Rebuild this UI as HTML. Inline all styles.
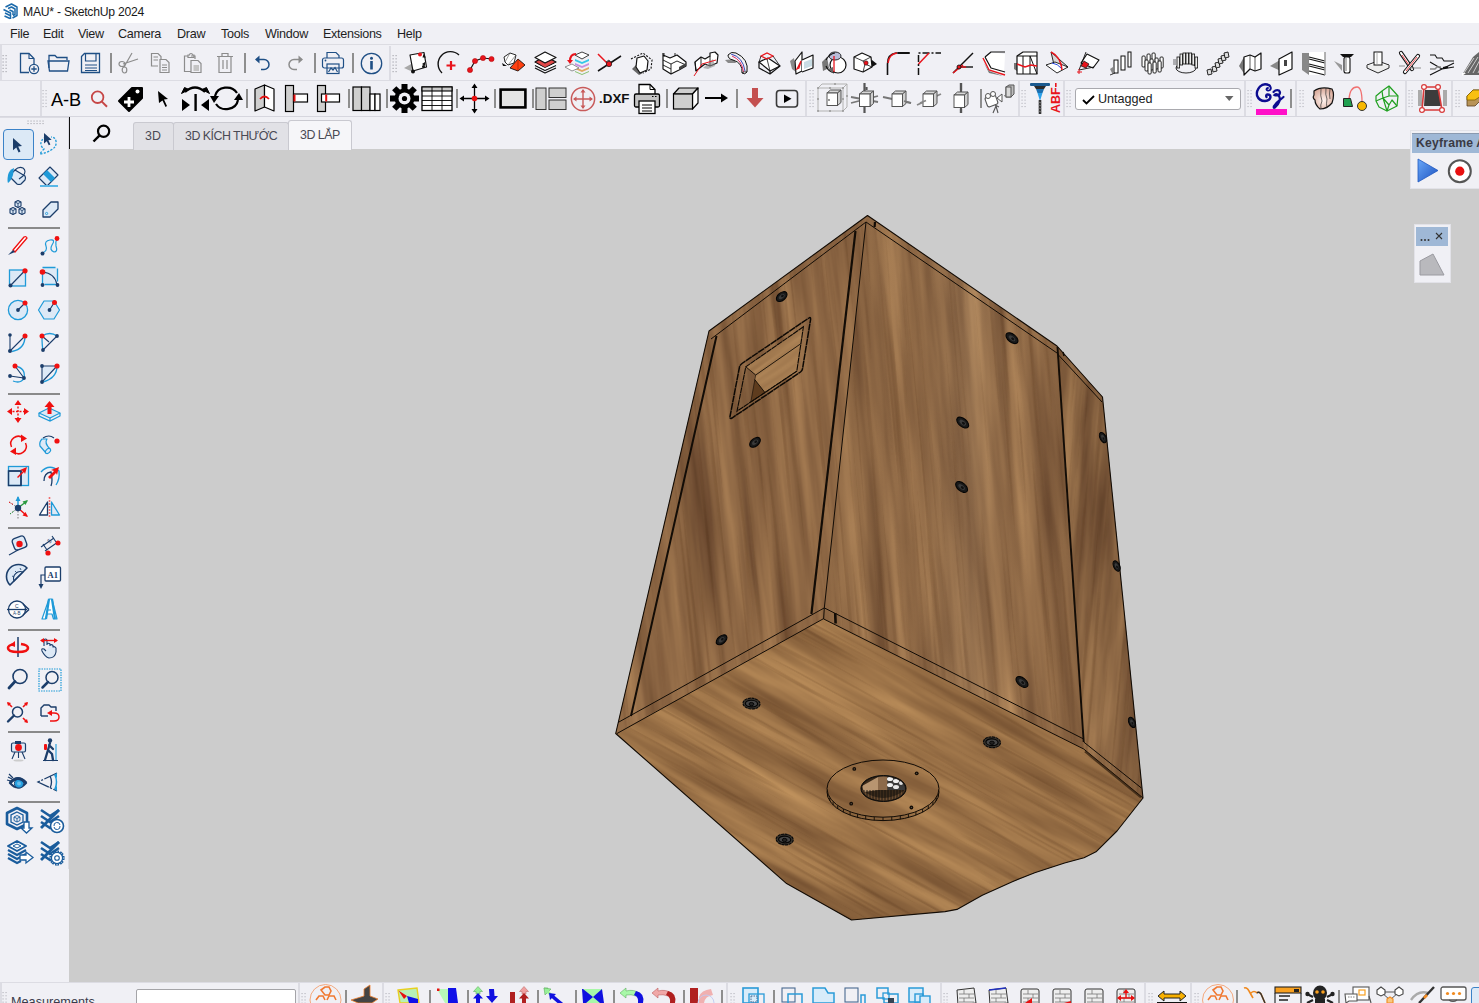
<!DOCTYPE html><html><head><meta charset="utf-8"><style>
html,body{margin:0;padding:0}
body{width:1479px;height:1003px;position:relative;overflow:hidden;background:#f0f0f5;font-family:"Liberation Sans",sans-serif}
.t{position:absolute;white-space:nowrap;line-height:1}
.a{position:absolute}
svg{position:absolute;overflow:visible}
</style></head><body>
<div style="position:absolute;left:0;top:0;width:1479px;height:23px;background:#fff"></div>
<svg style="position:absolute;left:2px;top:2px" width="17" height="18" viewBox="0 0 17 18"><g fill="none" stroke="#1b6aab" stroke-width="1.5" stroke-linejoin="round"><path d="M3.5,5 L9.5,2 L15,5 V13.5 L10.5,16"/><path d="M6,6.5 L9.5,5 L13,7 V12.5 L11,13.5"/><path d="M1.5,7.5 L8.5,11 V17"/><path d="M3,11 L8,13.5"/><path d="M2.5,14 L8,16.5"/><path d="M7.5,8 L11,9.5 V13"/></g></svg>
<div class="t" style="left:23px;top:6px;font-size:12.2px;color:#1a1a1a;letter-spacing:-0.25px">MAU* - SketchUp 2024</div>
<div class="t" style="left:10px;top:28px;font-size:12.6px;color:#1e1e1e;letter-spacing:-0.3px">File</div>
<div class="t" style="left:43px;top:28px;font-size:12.6px;color:#1e1e1e;letter-spacing:-0.3px">Edit</div>
<div class="t" style="left:78px;top:28px;font-size:12.6px;color:#1e1e1e;letter-spacing:-0.3px">View</div>
<div class="t" style="left:118px;top:28px;font-size:12.6px;color:#1e1e1e;letter-spacing:-0.3px">Camera</div>
<div class="t" style="left:177px;top:28px;font-size:12.6px;color:#1e1e1e;letter-spacing:-0.3px">Draw</div>
<div class="t" style="left:221px;top:28px;font-size:12.6px;color:#1e1e1e;letter-spacing:-0.3px">Tools</div>
<div class="t" style="left:265px;top:28px;font-size:12.6px;color:#1e1e1e;letter-spacing:-0.3px">Window</div>
<div class="t" style="left:323px;top:28px;font-size:12.6px;color:#1e1e1e;letter-spacing:-0.3px">Extensions</div>
<div class="t" style="left:397px;top:28px;font-size:12.6px;color:#1e1e1e;letter-spacing:-0.3px">Help</div>
<div style="position:absolute;left:0;top:44px;width:1479px;height:1px;background:#dcdce2"></div>
<div style="position:absolute;left:69px;top:149px;width:1410px;height:833px;background:#cccccc"></div>
<svg width="1479" height="1003" style="left:0;top:0" viewBox="0 0 1479 1003">
<defs>
<filter id="wA" filterUnits="userSpaceOnUse" x="-2000" y="-2000" width="4000" height="4000" color-interpolation-filters="sRGB"><feTurbulence type="fractalNoise" baseFrequency="0.055 0.0032" numOctaves="4" seed="7" result="n"/><feColorMatrix in="n" type="matrix" values="0.38 0 0 0 0.38  0.33 0 0 0 0.255  0.23 0 0 0 0.165  0 0 0 0 1"/></filter>
<filter id="wB" filterUnits="userSpaceOnUse" x="-2000" y="-2000" width="4000" height="4000" color-interpolation-filters="sRGB"><feTurbulence type="fractalNoise" baseFrequency="0.05 0.003" numOctaves="4" seed="11" result="n"/><feColorMatrix in="n" type="matrix" values="0.38 0 0 0 0.38  0.33 0 0 0 0.255  0.23 0 0 0 0.165  0 0 0 0 1"/></filter>
<filter id="wC" filterUnits="userSpaceOnUse" x="-2000" y="-2000" width="4000" height="4000" color-interpolation-filters="sRGB"><feTurbulence type="fractalNoise" baseFrequency="0.06 0.005" numOctaves="4" seed="5" result="n"/><feColorMatrix in="n" type="matrix" values="0.38 0 0 0 0.38  0.33 0 0 0 0.255  0.23 0 0 0 0.165  0 0 0 0 1"/></filter>
<filter id="wD" filterUnits="userSpaceOnUse" x="-2000" y="-2000" width="4000" height="4000" color-interpolation-filters="sRGB"><feTurbulence type="fractalNoise" baseFrequency="0.0045 0.05" numOctaves="4" seed="21" result="n"/><feColorMatrix in="n" type="matrix" values="0.39 0 0 0 0.405  0.34 0 0 0 0.27  0.23 0 0 0 0.16  0 0 0 0 1"/></filter>
<filter id="fV" filterUnits="userSpaceOnUse" x="-2000" y="-2000" width="4000" height="4000" color-interpolation-filters="sRGB"><feTurbulence type="fractalNoise" baseFrequency="0.22 0.004" numOctaves="2" seed="17" result="n"/><feColorMatrix in="n" type="matrix" values="0 0 0 0 0.33  0 0 0 0 0.2  0 0 0 0 0.1  4 0 0 0 -2.3"/></filter>
<filter id="fH" filterUnits="userSpaceOnUse" x="-2000" y="-2000" width="4000" height="4000" color-interpolation-filters="sRGB"><feTurbulence type="fractalNoise" baseFrequency="0.006 0.22" numOctaves="2" seed="23" result="n"/><feColorMatrix in="n" type="matrix" values="0 0 0 0 0.33  0 0 0 0 0.2  0 0 0 0 0.1  4 0 0 0 -2.3"/></filter>
<linearGradient id="gB" x1="0" y1="0" x2="1" y2="0">
<stop offset="0" stop-color="#000" stop-opacity="0.10"/><stop offset="0.5" stop-color="#fff" stop-opacity="0.04"/><stop offset="1" stop-color="#000" stop-opacity="0.06"/></linearGradient>
</defs>
<polygon points="867.5,215.5 1057,346 1102.5,397 1143,798 1117,831 1096,851.8 1084,857.8 1064.6,863 1034.7,872.7 1012.3,881.7 982.3,895.2 956.9,909.4 945,911.6 851.5,920 786.6,883.6 615.7,733.5 709,331" fill="#8a603a"/>
<clipPath id="cA"><polygon points="709,331 867.5,215.5 866,222 824.3,608 823.3,618.8 617,733.5 615.7,733.5"/></clipPath><g clip-path="url(#cA)"><g transform="rotate(-6 740 480)"><rect x="240" y="-20" width="1000" height="1000" filter="url(#wA)"/><rect x="240" y="-20" width="1000" height="1000" filter="url(#fV)" opacity="0.25"/></g></g>
<clipPath id="cB"><polygon points="867.5,215.5 1057,346 1083.7,749 823.3,618.8 824.3,608 866,222"/></clipPath><g clip-path="url(#cB)"><g transform="rotate(-5 950 480)"><rect x="450" y="-20" width="1000" height="1000" filter="url(#wB)"/><rect x="450" y="-20" width="1000" height="1000" filter="url(#fV)" opacity="0.25"/></g></g>
<clipPath id="cC"><polygon points="1057,346 1102.5,397 1143,798 1083.7,749"/></clipPath><g clip-path="url(#cC)"><g transform="rotate(5 1100 570)"><rect x="600" y="70" width="1000" height="1000" filter="url(#wC)"/><rect x="600" y="70" width="1000" height="1000" filter="url(#fV)" opacity="0.25"/></g></g>
<clipPath id="cD"><polygon points="615.7,733.5 823.3,618.8 1083.7,749 1143,798 1117,831 1096,851.8 1084,857.8 1064.6,863 1034.7,872.7 1012.3,881.7 982.3,895.2 956.9,909.4 945,911.6 851.5,920 786.6,883.6"/></clipPath><g clip-path="url(#cD)"><g transform="rotate(29 880 780)"><rect x="380" y="280" width="1000" height="1000" filter="url(#wD)"/><rect x="380" y="280" width="1000" height="1000" filter="url(#fH)" opacity="0.25"/></g></g>
<polygon points="1057,346 1102.5,397 1143,798 1083.7,749" fill="#1a0800" fill-opacity="0.10"/>
<polygon points="709,331 867.5,215.5 866,222 824.3,608 823.3,618.8 617,733.5 615.7,733.5" fill="#3a1a00" fill-opacity="0.05"/>
<linearGradient id="gBs" gradientUnits="userSpaceOnUse" x1="840" y1="0" x2="1080" y2="0"><stop offset="0" stop-color="#2a1000" stop-opacity="0.10"/><stop offset="0.3" stop-color="#2a1000" stop-opacity="0.05"/><stop offset="0.55" stop-color="#fff0d0" stop-opacity="0.06"/><stop offset="0.8" stop-color="#2a1000" stop-opacity="0.0"/><stop offset="1" stop-color="#2a1000" stop-opacity="0.08"/></linearGradient>
<polygon points="867.5,215.5 1057,346 1083.7,749 823.3,618.8 824.3,608 866,222" fill="url(#gBs)"/>
<polygon points="867.5,215.5 1057,346 1102.5,397 1143,798 1117,831 1096,851.8 1084,857.8 1064.6,863 1034.7,872.7 1012.3,881.7 982.3,895.2 956.9,909.4 945,911.6 851.5,920 786.6,883.6 615.7,733.5 709,331" fill="none" stroke="#120c06" stroke-width="1.1" stroke-linejoin="round"/>
<line x1="711" y1="339" x2="866" y2="222" stroke="#120c06" stroke-width="1" stroke-opacity="1"/>
<line x1="866" y1="222" x2="1057" y2="353" stroke="#120c06" stroke-width="1" stroke-opacity="1"/>
<line x1="1058" y1="354.5" x2="1102" y2="402" stroke="#120c06" stroke-width="1" stroke-opacity="1"/>
<line x1="631" y1="716" x2="716.5" y2="336" stroke="#120c06" stroke-width="2" stroke-opacity="1"/>
<line x1="855.5" y1="231" x2="811.4" y2="614" stroke="#120c06" stroke-width="2.2" stroke-opacity="1"/>
<line x1="866" y1="222" x2="824.3" y2="608" stroke="#120c06" stroke-width="1" stroke-opacity="1"/>
<line x1="618" y1="722.5" x2="824.3" y2="607.9" stroke="#120c06" stroke-width="1" stroke-opacity="1"/>
<line x1="617" y1="733.5" x2="823.3" y2="618.8" stroke="#120c06" stroke-width="1" stroke-opacity="1"/>
<line x1="824.3" y1="607.9" x2="1083.7" y2="739" stroke="#120c06" stroke-width="1" stroke-opacity="1"/>
<line x1="823.3" y1="618.8" x2="1083.7" y2="749" stroke="#120c06" stroke-width="1" stroke-opacity="1"/>
<line x1="1057.5" y1="347" x2="1083.7" y2="742" stroke="#120c06" stroke-width="1.9" stroke-opacity="1"/>
<line x1="1083.7" y1="742" x2="1141.4" y2="788" stroke="#120c06" stroke-width="1" stroke-opacity="1"/>
<line x1="1083.7" y1="749" x2="1143" y2="798" stroke="#120c06" stroke-width="1" stroke-opacity="1"/>
<line x1="1085" y1="751.5" x2="1141" y2="797.5" stroke="#2a1a0c" stroke-width="2.2" stroke-opacity="0.7"/>
<line x1="875" y1="222" x2="874.6" y2="227" stroke="#120c06" stroke-width="2.2" stroke-opacity="1"/>
<line x1="835.2" y1="613" x2="835.6" y2="623.5" stroke="#120c06" stroke-width="2.6" stroke-opacity="1"/>
<line x1="824.3" y1="608" x2="823.6" y2="619" stroke="#120c06" stroke-width="1" stroke-opacity="1"/>
<line x1="1063" y1="352" x2="1064" y2="356" stroke="#120c06" stroke-width="1.5" stroke-opacity="1"/>
<filter id="wH" filterUnits="userSpaceOnUse" x="-2000" y="-2000" width="4000" height="4000" color-interpolation-filters="sRGB"><feTurbulence type="fractalNoise" baseFrequency="0.004 0.09" numOctaves="3" seed="9" result="n"/><feColorMatrix in="n" type="matrix" values="0.40 0 0 0 0.45  0.36 0 0 0 0.31  0.26 0 0 0 0.19  0 0 0 0 1"/></filter>
<clipPath id="cH1"><polygon points="745.8,366.8 803.4,326.8 800.7,343.8 755.7,375"/></clipPath><g clip-path="url(#cH1)"><g transform="rotate(-35 775 350)"><rect x="275" y="-150" width="1000" height="1000" filter="url(#wH)"/></g></g>
<clipPath id="cH2"><polygon points="755.7,375 800.7,343.8 796.8,371.2 765,392.6 754.6,380"/></clipPath><g clip-path="url(#cH2)"><g transform="rotate(-35 775 360)"><rect x="275" y="-140" width="1000" height="1000" filter="url(#wH)"/></g></g>
<polygon points="745.8,366.8 755.7,375 754.6,380 750.8,402 737,411.2" fill="#000" fill-opacity="0.06"/>
<polygon points="754.6,379.4 765,392.6 750.8,402" fill="#5e3c1e"/>
<path d="M808.9,318 Q811,316.5 810.5,320 L802.5,369 Q802,371 800.5,372 L732,418 Q729.5,419.5 730,416.5 L739.5,367 Q740,365 742,363.5 Z" fill="none" stroke="#0c0804" stroke-width="1.5" stroke-dasharray="7,0.5"/>
<polygon points="803.4,326.8 745.8,366.8 737,411.2 796.8,371.2" fill="none" stroke="#0c0804" stroke-width="1.1" stroke-dasharray="6,0.5"/>
<line x1="745.8" y1="366.8" x2="755.7" y2="375" stroke="#120c06" stroke-width="0.9" stroke-opacity="1"/>
<line x1="755.7" y1="375" x2="800.7" y2="343.8" stroke="#120c06" stroke-width="0.9" stroke-opacity="1"/>
<line x1="754.6" y1="379.4" x2="765" y2="392.6" stroke="#120c06" stroke-width="0.9" stroke-opacity="1"/>
<line x1="750.8" y1="402" x2="796.8" y2="371.2" stroke="#120c06" stroke-width="0.9" stroke-opacity="1"/>
<line x1="755.7" y1="375" x2="750.8" y2="402" stroke="#120c06" stroke-width="0.6" stroke-opacity="1"/>
<g transform="translate(781.7,296.6) rotate(-40)"><ellipse rx="6.2" ry="3.8" fill="#1a1a1a" stroke="#050505" stroke-width="1.1"/><ellipse rx="3.4100000000000006" ry="1.9" fill="#3a3a3a"/><ellipse cx="1" rx="1.55" ry="1.14" fill="#111"/></g>
<g transform="translate(755,442.3) rotate(-40)"><ellipse rx="6.2" ry="3.8" fill="#1a1a1a" stroke="#050505" stroke-width="1.1"/><ellipse rx="3.4100000000000006" ry="1.9" fill="#3a3a3a"/><ellipse cx="1" rx="1.55" ry="1.14" fill="#111"/></g>
<g transform="translate(721.6,639.8) rotate(-40)"><ellipse rx="6.2" ry="3.8" fill="#1a1a1a" stroke="#050505" stroke-width="1.1"/><ellipse rx="3.4100000000000006" ry="1.9" fill="#3a3a3a"/><ellipse cx="1" rx="1.55" ry="1.14" fill="#111"/></g>
<g transform="translate(1012,338.2) rotate(40)"><ellipse rx="7" ry="4" fill="#1a1a1a" stroke="#050505" stroke-width="1.1"/><ellipse rx="3.8500000000000005" ry="2.0" fill="#3a3a3a"/><ellipse cx="1" rx="1.75" ry="1.2" fill="#111"/></g>
<g transform="translate(962.7,422.6) rotate(40)"><ellipse rx="7" ry="4" fill="#1a1a1a" stroke="#050505" stroke-width="1.1"/><ellipse rx="3.8500000000000005" ry="2.0" fill="#3a3a3a"/><ellipse cx="1" rx="1.75" ry="1.2" fill="#111"/></g>
<g transform="translate(961.6,487) rotate(40)"><ellipse rx="7" ry="4" fill="#1a1a1a" stroke="#050505" stroke-width="1.1"/><ellipse rx="3.8500000000000005" ry="2.0" fill="#3a3a3a"/><ellipse cx="1" rx="1.75" ry="1.2" fill="#111"/></g>
<g transform="translate(1022,682) rotate(40)"><ellipse rx="7" ry="4" fill="#1a1a1a" stroke="#050505" stroke-width="1.1"/><ellipse rx="3.8500000000000005" ry="2.0" fill="#3a3a3a"/><ellipse cx="1" rx="1.75" ry="1.2" fill="#111"/></g>
<g transform="translate(1103,437.6) rotate(65)"><ellipse rx="5.5" ry="3" fill="#1a1a1a" stroke="#050505" stroke-width="1.1"/><ellipse rx="3.0250000000000004" ry="1.5" fill="#3a3a3a"/><ellipse cx="1" rx="1.375" ry="0.8999999999999999" fill="#111"/></g>
<g transform="translate(1116.6,566) rotate(65)"><ellipse rx="5.5" ry="3" fill="#1a1a1a" stroke="#050505" stroke-width="1.1"/><ellipse rx="3.0250000000000004" ry="1.5" fill="#3a3a3a"/><ellipse cx="1" rx="1.375" ry="0.8999999999999999" fill="#111"/></g>
<g transform="translate(1132,722.4) rotate(65)"><ellipse rx="5.5" ry="3" fill="#1a1a1a" stroke="#050505" stroke-width="1.1"/><ellipse rx="3.0250000000000004" ry="1.5" fill="#3a3a3a"/><ellipse cx="1" rx="1.375" ry="0.8999999999999999" fill="#111"/></g>
<g transform="translate(751.5,703.6) rotate(4)"><ellipse rx="8.5" ry="5.4" fill="#3a3630" stroke="#0a0a0a" stroke-width="1.2" stroke-dasharray="3,0.6"/><ellipse rx="6.12" ry="3.3480000000000003" fill="#454545" stroke="#050505" stroke-width="1.2"/><ellipse cx="0" cy="0.5" rx="2.3800000000000003" ry="1.62" fill="#222" stroke="#000" stroke-width="0.8"/></g>
<g transform="translate(992,742.3) rotate(4)"><ellipse rx="8.5" ry="5.4" fill="#3a3630" stroke="#0a0a0a" stroke-width="1.2" stroke-dasharray="3,0.6"/><ellipse rx="6.12" ry="3.3480000000000003" fill="#454545" stroke="#050505" stroke-width="1.2"/><ellipse cx="0" cy="0.5" rx="2.3800000000000003" ry="1.62" fill="#222" stroke="#000" stroke-width="0.8"/></g>
<g transform="translate(784.7,839.5) rotate(4)"><ellipse rx="8.5" ry="5.4" fill="#3a3630" stroke="#0a0a0a" stroke-width="1.2" stroke-dasharray="3,0.6"/><ellipse rx="6.12" ry="3.3480000000000003" fill="#454545" stroke="#050505" stroke-width="1.2"/><ellipse cx="0" cy="0.5" rx="2.3800000000000003" ry="1.62" fill="#222" stroke="#000" stroke-width="0.8"/></g>
<ellipse cx="883" cy="792" rx="56" ry="28.6" fill="#6a4a2a" fill-opacity="0.25" stroke="#120c06" stroke-width="1"/>
<line x1="938.3105482356433" y1="793.0740219522354" x2="938.3105482356433" y2="796.5740219522354" stroke="#120c06" stroke-width="0.9"/><line x1="936.259169504551" y1="797.4378788213015" x2="936.259169504551" y2="800.9378788213015" stroke="#120c06" stroke-width="0.9"/><line x1="932.8963754740629" y1="801.5841181494206" x2="932.8963754740629" y2="805.0841181494206" stroke="#120c06" stroke-width="0.9"/><line x1="928.3049691540892" y1="805.4106459358708" x2="928.3049691540892" y2="808.9106459358708" stroke="#120c06" stroke-width="0.9"/><line x1="922.5980060156367" y1="808.8232405258758" x2="922.5980060156367" y2="812.3232405258758" stroke="#120c06" stroke-width="0.9"/><line x1="915.9160101945953" y1="811.7378726565389" x2="915.9160101945953" y2="815.2378726565389" stroke="#120c06" stroke-width="0.9"/><line x1="908.4235143269736" y1="814.0827745326837" x2="908.4235143269736" y2="817.5827745326837" stroke="#120c06" stroke-width="0.9"/><line x1="900.3050082161778" y1="815.8002069851764" x2="900.3050082161778" y2="819.3002069851764" stroke="#120c06" stroke-width="0.9"/><line x1="891.7603960894231" y1="816.8478811984978" x2="891.7603960894231" y2="820.3478811984978" stroke="#120c06" stroke-width="0.9"/><line x1="883.0000743005143" y1="817.1999999999748" x2="883.0000743005143" y2="820.6999999999748" stroke="#120c06" stroke-width="0.9"/><line x1="874.2397506820831" y1="816.8478930707167" x2="874.2397506820831" y2="820.3478930707167" stroke="#120c06" stroke-width="0.9"/><line x1="865.6951331118107" y1="815.8002304372815" x2="865.6951331118107" y2="819.3002304372815" stroke="#120c06" stroke-width="0.9"/><line x1="857.576618077539" y1="814.0828089872072" x2="857.576618077539" y2="817.5828089872072" stroke="#120c06" stroke-width="0.9"/><line x1="850.0841100262085" y1="811.7379172650974" x2="850.0841100262085" y2="815.2379172650974" stroke="#120c06" stroke-width="0.9"/><line x1="843.4020990612279" y1="808.8232941900604" x2="843.4020990612279" y2="812.3232941900604" stroke="#120c06" stroke-width="0.9"/><line x1="837.6951181914994" y1="805.4107073342934" x2="837.6951181914994" y2="808.9107073342934" stroke="#120c06" stroke-width="0.9"/><line x1="833.1036919895153" y1="801.5841857702511" x2="833.1036919895153" y2="805.0841857702511" stroke="#120c06" stroke-width="0.9"/><line x1="829.7408764158422" y1="797.4379509994932" x2="829.7408764158422" y2="800.9379509994932" stroke="#120c06" stroke-width="0.9"/><line x1="827.6894750108543" y1="793.0740969105246" x2="827.6894750108543" y2="796.5740969105246" stroke="#120c06" stroke-width="0.9"/>
<clipPath id="cP"><polygon points="939.0,788.6 938.3105438554751,793.0740360761785 936.2591521995869,797.4379060215158 932.8963373388347,801.5841563735937 928.3049033220985,805.4106922116271 922.5979070206292,808.823291083981 915.9158742796707,811.7379230884646 908.4233396896219,814.0828199770596 900.3047951794532,815.8002423366185 891.7601471919196,816.8479013314792 882.9997943005142,817.1999999998071 874.2394464741365,816.847868463375 865.6948135569675,815.8001774097355 857.5762937514162,814.0827245901206 850.0837928919251,811.7377995902239 843.4018020769024,808.8231425153889 837.6948548643868,805.4105222309527 833.1034758908833,801.5839691663449 829.7407206722892,797.4377061973779 827.6893917888901,793.0738285555078 827.0000000015111,788.5997898926681 827.6895205031448,784.1257564033924 829.7409749314114,779.7618941548233 833.1038494341404,775.6156564198583 837.6953384938614,771.7891378086059 843.4023838839762,768.3765603485185 850.0844585505099,765.4619534145432 857.5770268707121,763.1170846373769 865.69559608506,761.3996927379666 874.240259142497,760.3520658019411 883.0006170984574,760.0000000017365 891.7609598593347,760.3521644062539 900.3055777056779,761.3998875186156 908.4240728061735,763.1173707981936 915.9165399347027,765.4623239092658 922.5984888234287,768.3770060542946 928.3053869466829,771.789647750629 932.896710876706,775.6162180416046 936.2594064529603,779.7624936272371 938.3106725637595,784.1263789654043"/></clipPath><g clip-path="url(#cP)"><g transform="rotate(24 880 780)"><rect x="380" y="280" width="1000" height="1000" filter="url(#wD)"/></g></g>
<ellipse cx="883" cy="788.6" rx="56" ry="28.6" fill="none" stroke="#120c06" stroke-width="1"/>
<ellipse cx="883.5" cy="788.5" rx="22.6" ry="13" fill="#1a140e" stroke="#0c0c0c" stroke-width="1"/>
<clipPath id="ph"><ellipse cx="883.5" cy="788.5" rx="21.5" ry="12"/></clipPath>
<g clip-path="url(#ph)"><rect x="860" y="776" width="48" height="26" fill="#3a2a1a"/><polygon points="862,786 878,777 878,790 864,792" fill="#b89570"/><rect x="878" y="776" width="9.5" height="14" fill="#8c6a4a"/><rect x="887.5" y="776" width="20" height="14" fill="#3a3a3a"/><ellipse cx="890" cy="779" rx="3" ry="2" fill="#f0f0f0"/><ellipse cx="896" cy="781" rx="3" ry="2" fill="#f0f0f0"/><ellipse cx="890" cy="785" rx="3" ry="2" fill="#f0f0f0"/><ellipse cx="896" cy="787" rx="3" ry="2" fill="#e8e8e8"/><ellipse cx="901" cy="783" rx="2" ry="2" fill="#ddd"/><path d="M862,790 Q883,806 905,790 L905,802 L862,802Z" fill="#6a4c30"/><line x1="864" y1="790" x2="864" y2="802" stroke="#0c0c0c" stroke-width="0.8"/><line x1="867" y1="790" x2="867" y2="802" stroke="#0c0c0c" stroke-width="0.8"/><line x1="870" y1="790" x2="870" y2="802" stroke="#0c0c0c" stroke-width="0.8"/><line x1="873" y1="790" x2="873" y2="802" stroke="#0c0c0c" stroke-width="0.8"/><line x1="876" y1="790" x2="876" y2="802" stroke="#0c0c0c" stroke-width="0.8"/><line x1="879" y1="790" x2="879" y2="802" stroke="#0c0c0c" stroke-width="0.8"/><line x1="882" y1="790" x2="882" y2="802" stroke="#0c0c0c" stroke-width="0.8"/><line x1="885" y1="790" x2="885" y2="802" stroke="#0c0c0c" stroke-width="0.8"/><line x1="888" y1="790" x2="888" y2="802" stroke="#0c0c0c" stroke-width="0.8"/><line x1="891" y1="790" x2="891" y2="802" stroke="#0c0c0c" stroke-width="0.8"/><line x1="894" y1="790" x2="894" y2="802" stroke="#0c0c0c" stroke-width="0.8"/><line x1="897" y1="790" x2="897" y2="802" stroke="#0c0c0c" stroke-width="0.8"/><line x1="900" y1="790" x2="900" y2="802" stroke="#0c0c0c" stroke-width="0.8"/><line x1="903" y1="790" x2="903" y2="802" stroke="#0c0c0c" stroke-width="0.8"/></g>
<circle cx="854.3" cy="768.9" r="1.9" fill="#120c06"/><circle cx="854.3" cy="768.9" r="0.6" fill="#6a5a4a"/>
<circle cx="916.7" cy="773.3" r="1.9" fill="#120c06"/><circle cx="916.7" cy="773.3" r="0.6" fill="#6a5a4a"/>
<circle cx="851.2" cy="803.7" r="1.9" fill="#120c06"/><circle cx="851.2" cy="803.7" r="0.6" fill="#6a5a4a"/>
<circle cx="911.4" cy="807.5" r="1.9" fill="#120c06"/><circle cx="911.4" cy="807.5" r="0.6" fill="#6a5a4a"/>
</svg>
<div class="a" style="left:0px;top:80px;width:1479px;height:1px;background:#dcdce3"></div>
<div class="a" style="left:0px;top:45px;width:2px;height:35px;background:#dcdce3"></div>
<svg style="left:2px;top:54px" width="5" height="21" viewBox="0 0 5 21" ><rect x="0.5" y="1.0" width="1.2" height="1.2" fill="#a8a8b0"/><rect x="3.5" y="1.0" width="1.2" height="1.2" fill="#a8a8b0"/><rect x="0.5" y="4.2" width="1.2" height="1.2" fill="#a8a8b0"/><rect x="3.5" y="4.2" width="1.2" height="1.2" fill="#a8a8b0"/><rect x="0.5" y="7.4" width="1.2" height="1.2" fill="#a8a8b0"/><rect x="3.5" y="7.4" width="1.2" height="1.2" fill="#a8a8b0"/><rect x="0.5" y="10.6" width="1.2" height="1.2" fill="#a8a8b0"/><rect x="3.5" y="10.6" width="1.2" height="1.2" fill="#a8a8b0"/><rect x="0.5" y="13.8" width="1.2" height="1.2" fill="#a8a8b0"/><rect x="3.5" y="13.8" width="1.2" height="1.2" fill="#a8a8b0"/><rect x="0.5" y="17.0" width="1.2" height="1.2" fill="#a8a8b0"/><rect x="3.5" y="17.0" width="1.2" height="1.2" fill="#a8a8b0"/></svg>
<svg style="left:19px;top:52px" width="22" height="23" viewBox="0 0 22 23" ><path d="M10,20.5 H1.5 V1.5 H10 L15,6.5 V12" fill="none" stroke="#1f4f85" stroke-width="1.3"/><path d="M10,1.5 V6.5 H15" fill="none" stroke="#1f4f85" stroke-width="1.1"/><circle cx="15" cy="17" r="4.6" fill="#f0f0f5" stroke="#1f4f85" stroke-width="1.3"/><path d="M15,14.3 V19.7 M12.3,17 H17.7" stroke="#1f4f85" stroke-width="1.3"/></svg>
<svg style="left:47px;top:54px" width="24" height="19" viewBox="0 0 24 19" ><path d="M2,14 V1.5 H8 L10,3.5 H20 V6" fill="none" stroke="#1f4f85" stroke-width="1.3"/><path d="M1,7 H22 L20.5,17 H2.5 Z" fill="none" stroke="#1f4f85" stroke-width="1.3"/></svg>
<svg style="left:80px;top:52px" width="22" height="22" viewBox="0 0 22 22" ><path d="M1.5,4.5 L4.5,1.5 H19.5 V20.5 H1.5 Z" fill="none" stroke="#1f4f85" stroke-width="1.3"/><path d="M5.5,1.5 V9 H16 V1.5" fill="none" stroke="#1f4f85" stroke-width="1.2"/><path d="M5,13 H17 M5,16 H17 M5,18.5 H17" stroke="#1f4f85" stroke-width="1"/></svg>
<div class="a" style="left:110px;top:53px;width:2px;height:20px;background:#8e8e8e"></div>
<svg style="left:118px;top:52px" width="22" height="22" viewBox="0 0 22 22" ><g fill="none" stroke="#8c8c8c" stroke-width="1.2"><path d="M14,1 L6,15 M20,7 L5,12"/><ellipse cx="4" cy="12" rx="3" ry="2.5"/><ellipse cx="6.5" cy="18" rx="2.3" ry="3"/></g></svg>
<svg style="left:150px;top:52px" width="22" height="22" viewBox="0 0 22 22" ><g fill="none" stroke="#8c8c8c" stroke-width="1.2"><path d="M8,14 H1.5 V1.5 H8 L11,4.5 V7"/><path d="M10,7.5 H16 L19,10.5 V20.5 H10 Z"/><path d="M3.5,5 H8 M3.5,8 H8 M12,13 H17 M12,15.5 H17 M12,18 H17"/></g></svg>
<svg style="left:183px;top:52px" width="22" height="22" viewBox="0 0 22 22" ><g fill="none" stroke="#8c8c8c" stroke-width="1.2"><path d="M5,4 H1.5 V19.5 H8"/><path d="M8,4 H12 V7"/><path d="M5,5.5 H11 V3 H9.5 A1.5,1.5 0 0 0 6.5,3 H5 Z"/><path d="M8,8.5 H15 L18,11.5 V20.5 H8 Z"/></g><rect x="10.5" y="13" width="5.5" height="6" fill="#c4c4c4"/></svg>
<svg style="left:216px;top:52px" width="19" height="22" viewBox="0 0 19 22" ><g fill="none" stroke="#8c8c8c" stroke-width="1.2"><path d="M1,4.5 H17 M6,4.5 V1.5 H12 V4.5"/><path d="M3,4.5 V20.5 H15 V4.5"/><path d="M7,8 V17 M11,8 V17"/></g></svg>
<div class="a" style="left:244px;top:53px;width:2px;height:20px;background:#8e8e8e"></div>
<svg style="left:254px;top:54px" width="18" height="17" viewBox="0 0 18 17" ><path d="M2.5,5.5 H10 A5,5 0 0 1 10,15.5 H7" fill="none" stroke="#1f4f85" stroke-width="1.5"/><path d="M1,5.5 L5.5,1.5 V9.5 Z" fill="#1f4f85"/></svg>
<svg style="left:286px;top:54px" width="18" height="17" viewBox="0 0 18 17" ><path d="M15.5,5.5 H8 A5,5 0 0 0 8,15.5 H11" fill="none" stroke="#8c8c8c" stroke-width="1.5"/><path d="M17,5.5 L12.5,1.5 V9.5 Z" fill="#8c8c8c"/></svg>
<div class="a" style="left:314px;top:53px;width:2px;height:20px;background:#8e8e8e"></div>
<svg style="left:321px;top:51px" width="24" height="24" viewBox="0 0 24 24" ><g fill="none" stroke="#1f4f85" stroke-width="1.2"><path d="M6,7 V1.5 H15 L18,4.5 V7"/><rect x="1.5" y="7" width="21" height="10" rx="2"/><rect x="6" y="13" width="12" height="9.5"/><path d="M7.5,21 L10,17 L12,19 L14,16.5 L16.5,21"/></g><circle cx="4.5" cy="9.5" r="0.9" fill="#1f4f85"/></svg>
<div class="a" style="left:352px;top:53px;width:2px;height:20px;background:#8e8e8e"></div>
<svg style="left:360px;top:52px" width="23" height="23" viewBox="0 0 23 23" ><circle cx="11.5" cy="11.5" r="10.2" fill="none" stroke="#1f4f85" stroke-width="1.3"/><circle cx="11.5" cy="6.3" r="1.5" fill="#1f4f85"/><rect x="10.2" y="9" width="2.6" height="8.5" fill="#1f4f85"/></svg>
<div class="a" style="left:389px;top:46px;width:2px;height:34px;background:#dcdce3"></div>
<svg style="left:392px;top:54px" width="5" height="21" viewBox="0 0 5 21" ><rect x="0.5" y="1.0" width="1.2" height="1.2" fill="#a8a8b0"/><rect x="3.5" y="1.0" width="1.2" height="1.2" fill="#a8a8b0"/><rect x="0.5" y="4.2" width="1.2" height="1.2" fill="#a8a8b0"/><rect x="3.5" y="4.2" width="1.2" height="1.2" fill="#a8a8b0"/><rect x="0.5" y="7.4" width="1.2" height="1.2" fill="#a8a8b0"/><rect x="3.5" y="7.4" width="1.2" height="1.2" fill="#a8a8b0"/><rect x="0.5" y="10.6" width="1.2" height="1.2" fill="#a8a8b0"/><rect x="3.5" y="10.6" width="1.2" height="1.2" fill="#a8a8b0"/><rect x="0.5" y="13.8" width="1.2" height="1.2" fill="#a8a8b0"/><rect x="3.5" y="13.8" width="1.2" height="1.2" fill="#a8a8b0"/><rect x="0.5" y="17.0" width="1.2" height="1.2" fill="#a8a8b0"/><rect x="3.5" y="17.0" width="1.2" height="1.2" fill="#a8a8b0"/></svg><svg style="left:404px;top:51px" width="26" height="25" viewBox="0 0 26 25"><path d="M0,17 L9,12 L9,21 Z" fill="#a8a8a8"/><path d="M6,4 L20,1.5 L22.5,16 L9,20 Z" fill="#fff" stroke="#111" stroke-width="1.2" stroke-linejoin="round"/><circle cx="9" cy="20.5" r="2" fill="#111"/><circle cx="19.5" cy="15.5" r="1.5" fill="#111"/><path d="M18,13 L21,11 L21,15Z" fill="#111"/><circle cx="16" cy="3.5" r="2" fill="#e8141c"/><path d="M19.5,3 L22,6.5 L18.5,6.5Z" fill="#111"/></svg>
<svg style="left:437px;top:51px" width="26" height="25" viewBox="0 0 26 25"><path d="M22,4 A10,10 0 1 0 5,22" fill="none" stroke="#111" stroke-width="1.4"/><path d="M14,10 V19 M9.5,14.5 H18.5" stroke="#e8141c" stroke-width="2.2"/></svg>
<svg style="left:467px;top:51px" width="28" height="25" viewBox="0 0 28 25"><path d="M3,19 L8,10 L16,7 L25,8" fill="none" stroke="#111" stroke-width="1.2"/><circle cx="3" cy="19" r="2.6" fill="#e8141c" stroke="#a00" stroke-width="0.5"/><circle cx="8" cy="10" r="2.6" fill="#e8141c" stroke="#a00" stroke-width="0.5"/><circle cx="16" cy="7" r="2.6" fill="#e8141c" stroke="#a00" stroke-width="0.5"/><circle cx="24.5" cy="8" r="2.6" fill="#e8141c" stroke="#a00" stroke-width="0.5"/></svg>
<svg style="left:501px;top:51px" width="26" height="25" viewBox="0 0 26 25"><path d="M3,6 L9,2 L15,4 L13,12 L7,14 L4,11Z" fill="#fff" stroke="#111" stroke-width="0.9"/><path d="M4,11 L9,2 M7,14 L15,4" stroke="#555" stroke-width="0.6"/><path d="M9,17 L17,8 L24,14 L17,20Z" fill="#ff4010" stroke="#111" stroke-width="0.9"/><path d="M17,8 L17,20" stroke="#a02000" stroke-width="0.7"/><path d="M1,12 L6,15 L2,15Z" fill="#111"/></svg>
<svg style="left:533px;top:51px" width="26" height="25" viewBox="0 0 26 25"><path d="M2,17 L12,22 L23,17 M2,14.5 L12,19.5 L23,14.5" fill="none" stroke="#111" stroke-width="1.2" stroke-linejoin="round"/><path d="M2,11 L12,5 L23,11 L12,17Z" fill="#e04848" stroke="#111" stroke-width="1.2" stroke-linejoin="round"/><path d="M2,12 L12,17 L23,12 V13.5 L12,18.5 L2,13.5Z" fill="#fff" stroke="none"/><path d="M2,6.5 L12,1 L23,6.5 L12,12Z" fill="#fff" stroke="#111" stroke-width="1.2" stroke-linejoin="round"/></svg>
<svg style="left:564px;top:51px" width="26" height="25" viewBox="0 0 26 25"><path d="M11,4 L18,1 L25,4 L18,8Z" fill="#fff" stroke="#111" stroke-width="0.8"/><path d="M11,8 L18,11 L25,8 L25,10 L18,13 L11,10Z" fill="#35c8e8"/><path d="M11,12 L18,15 L25,12 L25,14 L18,17 L11,14Z" fill="#c890e0"/><path d="M11,16 L18,19 L25,16 L25,18 L18,21 L11,18Z" fill="#e0a860"/><path d="M11,20 L18,23 L25,20 L25,21 L18,24 L11,21Z" fill="#88c070"/><path d="M1,16 L8,13 L15,17 L8,20Z" fill="#fff" stroke="#666" stroke-width="0.7"/><path d="M12,3 Q6,3 6,10" fill="none" stroke="#e8141c" stroke-width="2"/><path d="M3,9 L9,9 L6,13Z" fill="#e8141c"/></svg>
<svg style="left:597px;top:51px" width="26" height="25" viewBox="0 0 26 25"><path d="M1,3 L11,13" stroke="#e8141c" stroke-width="1.5"/><path d="M1,20 L24,5" stroke="#111" stroke-width="1.5"/><path d="M9,11 L12,9 L14,12" fill="#fff" stroke="#111" stroke-width="0.8"/><circle cx="12" cy="13" r="2.7" fill="#e8141c" stroke="#111" stroke-width="0.7"/></svg>
<svg style="left:629px;top:51px" width="26" height="25" viewBox="0 0 26 25"><path d="M3,18 L10,24 L14,22 L7,14Z" fill="#666"/><path d="M2,8 L14,2 L23,9 L22,18 L14,22" fill="none" stroke="#111" stroke-width="1.1" stroke-dasharray="2,1.5"/><path d="M8,7 L15,5 L19,10 L18,19 L11,22 L7,16Z" fill="#fff" stroke="#111" stroke-width="1.2" stroke-linejoin="round"/></svg>
<svg style="left:661px;top:51px" width="26" height="25" viewBox="0 0 26 25"><path d="M2,2 V18 L10,23 L18,19 L25,15 L25,11 L16,4 L9,7 L2,4" fill="#fff" stroke="#111" stroke-width="1.2" stroke-linejoin="round"/><path d="M2,9 L10,13 L16,10 L25,14 M10,13 V18 M2,14 L10,18 L10,23" fill="none" stroke="#111" stroke-width="0.9"/><path d="M18,19 L25,15 L25,12 L18,16Z" fill="#444"/><path d="M3,2 V6 M14,2 V5" stroke="#111" stroke-width="0.9"/></svg>
<svg style="left:693px;top:51px" width="26" height="25" viewBox="0 0 26 25"><path d="M2,11 L8,6 L12,8 L17,5 L17,2 L22,1 L25,4 L24,12 L17,15 L12,13 L8,16 L3,20Z" fill="#fff" stroke="#111" stroke-width="1.2" stroke-linejoin="round"/><path d="M2,11 L3,20 M8,6 V16 M17,5 V15" stroke="#111" stroke-width="0.9"/><path d="M20,8 L22,15 L15,18 L10,17Z" fill="#888" opacity="0.6"/><path d="M1,25 L9,13 L23,9" fill="none" stroke="#e8141c" stroke-width="1"/></svg>
<svg style="left:725px;top:51px" width="26" height="25" viewBox="0 0 26 25"><path d="M0,9 L9,8 L11,12 L3,12Z" fill="#8a8a8a"/><path d="M3,4 Q6,0 11,2 Q24,8 22,21 Q20,24 17,22 Q18,12 8,9 Q3,8 3,4Z" fill="#f2f2f2" stroke="#111" stroke-width="1"/><path d="M6,3 Q18,6 20,20" fill="none" stroke="#2030b0" stroke-width="0.9"/><path d="M7,5 Q17,9 18.5,21" fill="none" stroke="#e01858" stroke-width="0.9"/><path d="M17,22 Q19,20 22,21" fill="none" stroke="#111" stroke-width="0.8"/></svg>
<svg style="left:757px;top:51px" width="26" height="25" viewBox="0 0 26 25"><path d="M2,11 L11,7 L23,15 L13,20Z" fill="#fff" stroke="#111" stroke-width="1.2" stroke-linejoin="round"/><path d="M2,11 L2,17 L13,23 L23,15 M13,20 V23" fill="none" stroke="#111" stroke-width="1.2" stroke-linejoin="round"/><path d="M4,5 L10,2 L16,5 L10,8Z" fill="none" stroke="#e8141c" stroke-width="1.2"/><path d="M4,5 L2,11 M10,8 L13,20 M16,5 L23,15" stroke="#111" stroke-width="0.8"/></svg>
<svg style="left:789px;top:51px" width="26" height="25" viewBox="0 0 26 25"><path d="M3,18 L1,10 L5,7 L7,21Z" fill="#888"/><path d="M6,10 L13,1 L13,20 L7,23Z" fill="#fff" stroke="#111" stroke-width="1.2" stroke-linejoin="round"/><path d="M8,18 L12,10 L10,17Z" fill="none" stroke="#e8141c" stroke-width="1.2"/><path d="M13,9 L24,4 V17 L13,21" fill="#fff" stroke="#111" stroke-width="1.2" stroke-linejoin="round"/><path d="M15,11 L23,8 V15 L15,18Z" fill="#c8dce4"/></svg>
<svg style="left:821px;top:51px" width="26" height="25" viewBox="0 0 26 25"><path d="M1,11 L6,6 L8,17 L2,20Z" fill="#777"/><circle cx="17" cy="14" r="8" fill="#fff" stroke="#111" stroke-width="1.2" stroke-linejoin="round"/><ellipse cx="14" cy="5" rx="6" ry="4" fill="#b8bcd8" stroke="#111" stroke-width="0.9"/><path d="M5,9 Q8,3 14,2 M5,15 Q7,20 13,22" fill="none" stroke="#111" stroke-width="1.2"/><path d="M13,5 V21" stroke="#e8141c" stroke-width="1.3"/><path d="M7,18 L12,16 L12,22Z" fill="#666"/></svg>
<svg style="left:853px;top:51px" width="26" height="25" viewBox="0 0 26 25"><path d="M1,6 L9,2 L18,6 L19,16 L10,21 L1,18Z" fill="#fff" stroke="#111" stroke-width="1.2" stroke-linejoin="round"/><path d="M1,6 L10,10 L18,6 M10,10 L12,13 L10,21 M12,13 L19,16" fill="none" stroke="#111" stroke-width="0.8"/><circle cx="13" cy="12" r="2.2" fill="#e8141c" stroke="#111" stroke-width="0.5"/><path d="M19,9 L24,13 L19,16Z" fill="#111"/></svg>
<svg style="left:886px;top:51px" width="26" height="25" viewBox="0 0 26 25"><path d="M1.5,24 V13 Q1.5,3 10,2 H24" fill="none" stroke="#111" stroke-width="1.6"/><path d="M2,12 Q3,3 11,2" fill="none" stroke="#e8141c" stroke-width="1.5"/><path d="M12,1 H23 V3 H12Z" fill="#111"/></svg>
<svg style="left:917px;top:51px" width="26" height="25" viewBox="0 0 26 25"><path d="M1.5,24 V2 H24" fill="none" stroke="#111" stroke-width="1.5" stroke-dasharray="7,2,2,2"/><path d="M1.5,13 L12,2" stroke="#e8141c" stroke-width="1.5"/></svg>
<svg style="left:949px;top:51px" width="26" height="25" viewBox="0 0 26 25"><path d="M4,22 L24,2" stroke="#111" stroke-width="1.4"/><path d="M4,22 L14,14" stroke="#e8141c" stroke-width="1.4"/><path d="M10,16 H24" stroke="#111" stroke-width="1.4"/><path d="M10,16 H17" stroke="#e8141c" stroke-width="1.4"/><circle cx="10" cy="16" r="2" fill="#e8141c" stroke="#111" stroke-width="0.9"/></svg>
<svg style="left:981px;top:51px" width="26" height="25" viewBox="0 0 26 25"><path d="M2,7 L8,19 L23,24 L24,3 L10,1 L4,6Z" fill="#fff"/><path d="M4,6 L10,1 H24 M4,6 L10,17 L24,21" fill="none" stroke="#111" stroke-width="1.2" stroke-linejoin="round"/><path d="M2,7 L8,19 L24,24" fill="none" stroke="#e8141c" stroke-width="1.4"/><path d="M3,12 L8,20 L22,25 L8,22Z" fill="#777"/></svg>
<svg style="left:1013px;top:51px" width="26" height="25" viewBox="0 0 26 25"><path d="M1,18 L4,20 L4,12 L1,12Z" fill="#777"/><path d="M4,5 L10,1 H24 V23 H4Z" fill="#fff" stroke="#111" stroke-width="1.2" stroke-linejoin="round"/><path d="M4,5 H24 M10,5 V23 M17,5 L24,23 M17,5 V23" fill="none" stroke="#111" stroke-width="1"/><path d="M4,13 L12,16 L18,14 L24,15" fill="none" stroke="#e8141c" stroke-width="1.6"/></svg>
<svg style="left:1045px;top:51px" width="26" height="25" viewBox="0 0 26 25"><path d="M6,1 L10,18 L23,16 Z" fill="#d8d8d8" stroke="#111" stroke-width="0.9"/><path d="M1,14 L10,11 L23,16 L12,22Z" fill="#fff" stroke="#111" stroke-width="0.9"/><path d="M6,1 Q16,6 17,19" fill="none" stroke="#e8141c" stroke-width="1.5"/><path d="M7,12 Q13,13 16,17" fill="none" stroke="#2848e0" stroke-width="1"/></svg>
<svg style="left:1077px;top:51px" width="26" height="25" viewBox="0 0 26 25"><path d="M10,3 L22,9 L16,17 L4,12Z" fill="#fff" stroke="#111" stroke-width="1.2" stroke-linejoin="round"/><path d="M7,10 L12,13 L9,17 L4,15Z" fill="#e8141c" stroke="#111" stroke-width="0.7"/><path d="M9,1 L2,19 M2,19 L17,16" fill="none" stroke="#111" stroke-width="0.9"/><path d="M2,18 V23 M0,21 H5" stroke="#e8141c" stroke-width="1"/></svg>
<svg style="left:1109px;top:51px" width="26" height="25" viewBox="0 0 26 25"><path d="M1,18 L4,16 V24Z" fill="#888"/><rect x="5" y="9" width="4" height="13" fill="#fff" stroke="#111" stroke-width="1"/><rect x="12" y="5" width="4" height="14" fill="#fff" stroke="#111" stroke-width="1"/><rect x="19" y="1" width="3" height="15" fill="#fff" stroke="#111" stroke-width="1"/><path d="M1,24 L6,22" stroke="#111" stroke-width="0.8"/></svg>
<svg style="left:1141px;top:51px" width="26" height="25" viewBox="0 0 26 25"><rect x="1" y="5" width="3.2" height="11" rx="1" fill="#fff" stroke="#111" stroke-width="0.9"/><rect x="6" y="3" width="3.2" height="11" rx="1" fill="#fff" stroke="#111" stroke-width="0.9"/><rect x="11" y="2" width="3.2" height="11" rx="1" fill="#fff" stroke="#111" stroke-width="0.9"/><rect x="4" y="9" width="3.2" height="11" rx="1" fill="#fff" stroke="#111" stroke-width="0.9"/><rect x="9" y="8" width="3.2" height="11" rx="1" fill="#fff" stroke="#111" stroke-width="0.9"/><rect x="14" y="7" width="3.2" height="11" rx="1" fill="#fff" stroke="#111" stroke-width="0.9"/><rect x="19" y="6" width="3.2" height="11" rx="1" fill="#fff" stroke="#111" stroke-width="0.9"/><rect x="7" y="12" width="3.2" height="11" rx="1" fill="#fff" stroke="#111" stroke-width="0.9"/><rect x="12" y="11" width="3.2" height="11" rx="1" fill="#fff" stroke="#111" stroke-width="0.9"/><rect x="17" y="10" width="3.2" height="11" rx="1" fill="#fff" stroke="#111" stroke-width="0.9"/></svg>
<svg style="left:1173px;top:51px" width="26" height="25" viewBox="0 0 26 25"><ellipse cx="13" cy="17" rx="10" ry="5" fill="none" stroke="#111" stroke-width="0.9"/><rect x="4" y="6" width="2.6" height="11" fill="#eee" stroke="#111" stroke-width="0.8"/><rect x="7" y="3" width="2.6" height="11" fill="#eee" stroke="#111" stroke-width="0.8"/><rect x="10" y="2" width="2.6" height="11" fill="#eee" stroke="#111" stroke-width="0.8"/><rect x="13" y="2" width="2.6" height="11" fill="#eee" stroke="#111" stroke-width="0.8"/><rect x="16" y="2" width="2.6" height="11" fill="#eee" stroke="#111" stroke-width="0.8"/><rect x="19" y="3" width="2.6" height="11" fill="#eee" stroke="#111" stroke-width="0.8"/><rect x="22" y="6" width="2.6" height="11" fill="#eee" stroke="#111" stroke-width="0.8"/><path d="M0,9 H3 M0,11 H3 M0,13 H3" stroke="#111" stroke-width="0.6"/></svg>
<svg style="left:1205px;top:51px" width="26" height="25" viewBox="0 0 26 25"><path d="M2,19 l4,-1 l1,5 l-4,1Z" fill="#ddd" stroke="#111" stroke-width="0.9"/><path d="M7,16 l4,-1 l1,5 l-4,1Z" fill="#ddd" stroke="#111" stroke-width="0.9"/><path d="M10,12 l4,-1 l1,5 l-4,1Z" fill="#ddd" stroke="#111" stroke-width="0.9"/><path d="M13,8 l4,-1 l1,5 l-4,1Z" fill="#ddd" stroke="#111" stroke-width="0.9"/><path d="M16,5 l4,-1 l1,5 l-4,1Z" fill="#ddd" stroke="#111" stroke-width="0.9"/><path d="M19,2 l4,-1 l1,5 l-4,1Z" fill="#ddd" stroke="#111" stroke-width="0.9"/></svg>
<svg style="left:1238px;top:51px" width="26" height="25" viewBox="0 0 26 25"><path d="M1,15 L6,6 L7,24Z" fill="#777"/><path d="M6,6 L12,4 L17,6 L23,2 V18 L17,20 L12,18 L6,24Z" fill="#fff" stroke="#111" stroke-width="1.2" stroke-linejoin="round"/><path d="M12,4 V18 M17,6 V20" stroke="#111" stroke-width="0.7"/></svg>
<svg style="left:1269px;top:51px" width="26" height="25" viewBox="0 0 26 25"><path d="M1,15 L16,6 L16,22 Z" fill="#888"/><path d="M10,8 L23,1 V18 L10,24Z" fill="#fff" stroke="#111" stroke-width="1.2" stroke-linejoin="round"/><rect x="15" y="9" width="3" height="6" fill="#444"/></svg>
<svg style="left:1301px;top:51px" width="26" height="25" viewBox="0 0 26 25"><path d="M1,2 H8 V24 L1,19Z" fill="#888"/><path d="M8,1 H24 V24 H8Z" fill="#fff"/><path d="M8,6 L24,10 M8,13 L24,17 M8,20 L24,24 M8,8 L24,12 M8,15 L24,19" stroke="#111" stroke-width="1.2"/><path d="M24,1 V24" stroke="#999" stroke-width="1.5"/></svg>
<svg style="left:1333px;top:51px" width="26" height="25" viewBox="0 0 26 25"><path d="M1,10 L9,20 L9,14Z" fill="#999"/><path d="M7,3 H21 L18,6 H10Z" fill="#111"/><rect x="11" y="6" width="6" height="16" rx="2" fill="#fff" stroke="#111" stroke-width="1.1"/><path d="M13,7 V20" stroke="#777" stroke-width="1"/></svg>
<svg style="left:1365px;top:51px" width="26" height="25" viewBox="0 0 26 25"><path d="M2,14 L13,10 L24,14 L13,19Z" fill="#fff" stroke="#111" stroke-width="0.9"/><path d="M2,14 V17 L13,22 L24,17 V14" fill="#eee" stroke="#111" stroke-width="0.9"/><rect x="9" y="1" width="8" height="13" fill="#fff" stroke="#111" stroke-width="1"/><path d="M12,1 V14" stroke="#999" stroke-width="0.8"/></svg>
<svg style="left:1397px;top:51px" width="26" height="25" viewBox="0 0 26 25"><path d="M4,2 L15,18" stroke="#111" stroke-width="4.2" stroke-linecap="round"/><path d="M4,2 L15,18" stroke="#fff" stroke-width="2.2" stroke-linecap="round"/><path d="M5,4 L14,17" stroke="#e8141c" stroke-width="0.8"/><path d="M8,21 L21,5" stroke="#111" stroke-width="4.2" stroke-linecap="round"/><path d="M8,21 L21,5" stroke="#fff" stroke-width="2.2" stroke-linecap="round"/><path d="M9,20 L20,6" stroke="#e8141c" stroke-width="0.8"/><path d="M2,15 H8 M13,17 H24" stroke="#777" stroke-width="0.8"/></svg>
<svg style="left:1429px;top:51px" width="26" height="25" viewBox="0 0 26 25"><path d="M1,4 H6 L8,7 H13 L15,10 H25 M1,11 L13,18 M1,24 L25,12 M13,18 L25,16" fill="none" stroke="#111" stroke-width="1.1"/><path d="M1,18 H6 L8,16 H12" fill="none" stroke="#888" stroke-width="1.5"/><path d="M14,17 L19,16" stroke="#111" stroke-width="2"/></svg>
<svg style="left:1461px;top:51px" width="18" height="25" viewBox="0 0 18 25"><path d="M1,24 L12,6 L18,1 H26 V24Z" fill="#666"/><path d="M3,22 L13,7 M7,22 L17,6 M12,22 L21,5 M17,22 L25,6" stroke="#ccc" stroke-width="1"/><path d="M1,22 H5 L1,25Z" fill="#fff"/></svg><div class="a" style="left:0px;top:116px;width:1479px;height:1px;background:#d6d6de"></div>
<div class="a" style="left:40px;top:81px;width:2px;height:35px;background:#dcdce3"></div>
<svg style="left:42px;top:89px" width="5" height="21" viewBox="0 0 5 21" ><rect x="0.5" y="1.0" width="1.1" height="1.1" fill="#b4b4bc"/><rect x="3.5" y="1.0" width="1.1" height="1.1" fill="#b4b4bc"/><rect x="0.5" y="4.2" width="1.1" height="1.1" fill="#b4b4bc"/><rect x="3.5" y="4.2" width="1.1" height="1.1" fill="#b4b4bc"/><rect x="0.5" y="7.4" width="1.1" height="1.1" fill="#b4b4bc"/><rect x="3.5" y="7.4" width="1.1" height="1.1" fill="#b4b4bc"/><rect x="0.5" y="10.6" width="1.1" height="1.1" fill="#b4b4bc"/><rect x="3.5" y="10.6" width="1.1" height="1.1" fill="#b4b4bc"/><rect x="0.5" y="13.8" width="1.1" height="1.1" fill="#b4b4bc"/><rect x="3.5" y="13.8" width="1.1" height="1.1" fill="#b4b4bc"/><rect x="0.5" y="17.0" width="1.1" height="1.1" fill="#b4b4bc"/><rect x="3.5" y="17.0" width="1.1" height="1.1" fill="#b4b4bc"/></svg>
<div class="t" style="left:51px;top:91px;font-size:18.2px;color:#000;letter-spacing:-0.1px">A-B</div>
<svg style="left:89px;top:89px" width="20" height="20" viewBox="0 0 20 20" ><circle cx="8.6" cy="8.2" r="5.8" fill="none" stroke="#c64646" stroke-width="1.8"/><path d="M12.6,12.4 L18,17.8" stroke="#c64646" stroke-width="2"/></svg>
<svg style="left:117px;top:85px" width="28" height="28" viewBox="0 0 28 28" ><path d="M2,16 L15,3 H25 V13 L12,26 Z" fill="#000" stroke="#000" stroke-width="2" stroke-linejoin="round"/><circle cx="20.5" cy="6.5" r="2" fill="#fff"/><path d="M12,12 V22 M7,17 H17" stroke="#fff" stroke-width="2.8"/></svg>
<svg style="left:157px;top:90px" width="13" height="18" viewBox="0 0 13 18" ><path d="M1,1 L11,9 L7,9.5 L10,16 L8.5,17 L5.5,10.5 L2,13 Z" fill="#000"/></svg>
<svg style="left:181px;top:83px" width="29" height="30" viewBox="0 0 29 30" ><path d="M4,9 Q14,0 24,9" fill="none" stroke="#000" stroke-width="2.2"/><path d="M0.5,10.5 L8,6.5 L3.5,4.5Z M28.5,10.5 L21,6.5 L25.5,4.5Z" fill="#000" stroke="#000" stroke-width="1" stroke-linejoin="round"/><path d="M1,16 L9,22 L1,28Z M28,16 L20,22 L28,28Z" fill="#000"/><rect x="13.4" y="11" width="2.4" height="17" fill="#000"/></svg>
<svg style="left:210px;top:84px" width="34" height="29" viewBox="0 0 34 29" ><path d="M5,12 A12,11 0 0 1 27,9" fill="none" stroke="#000" stroke-width="2.2"/><path d="M28,16 A12,11 0 0 1 6,20" fill="none" stroke="#000" stroke-width="2.2"/><path d="M0,12 L9,12 L4,19Z" fill="#000"/><path d="M33,16 L24,16 L29,9Z" fill="#000"/></svg>
<div class="a" style="left:246px;top:89px;width:2px;height:19px;background:#8e8e8e"></div>
<svg style="left:254px;top:84px" width="22" height="29" viewBox="0 0 22 29" ><path d="M1,5 L10.5,1 V23 L1,27Z" fill="#cfcfcf" stroke="#000" stroke-width="1.2" stroke-linejoin="round"/><path d="M10.5,1 L20,5 V27 L10.5,23Z" fill="#fff" stroke="#000" stroke-width="1.2" stroke-linejoin="round"/><path d="M6,15 Q10.5,10 15,15" fill="none" stroke="#e81010" stroke-width="1.8"/></svg>
<svg style="left:284px;top:84px" width="25" height="29" viewBox="0 0 25 29" ><rect x="1.5" y="1.5" width="8" height="26" fill="#cfcfcf" stroke="#000" stroke-width="1.2"/><rect x="9.5" y="10" width="14" height="8" fill="#fff" stroke="#000" stroke-width="1.2"/><rect x="9.5" y="10.6" width="2" height="6.8" fill="#e81010"/></svg>
<svg style="left:316px;top:84px" width="25" height="29" viewBox="0 0 25 29" ><rect x="1.5" y="1.5" width="8" height="26" fill="#cfcfcf" stroke="#000" stroke-width="1.2"/><rect x="5.5" y="10" width="18" height="8" fill="#fff" stroke="#000" stroke-width="1.2"/><rect x="9.2" y="10.6" width="2" height="6.8" fill="#e81010"/></svg>
<div class="a" style="left:348px;top:89px;width:2px;height:19px;background:#8e8e8e"></div>
<svg style="left:352px;top:86px" width="29" height="26" viewBox="0 0 29 26" ><rect x="1" y="1" width="8.5" height="23.5" fill="#cfcfcf" stroke="#000" stroke-width="1.2"/><rect x="9.5" y="1" width="8.5" height="23.5" fill="#cfcfcf" stroke="#000" stroke-width="1.2"/><rect x="18" y="8" width="5" height="16.5" fill="#fff" stroke="#000" stroke-width="1.2"/><rect x="23" y="8" width="5" height="16.5" fill="#fff" stroke="#000" stroke-width="1.2"/></svg>
<div class="a" style="left:386px;top:89px;width:2px;height:19px;background:#8e8e8e"></div>
<svg style="left:390px;top:84px" width="29" height="29" viewBox="0 0 29 29" ><rect x="11.5" y="0" width="6" height="7" fill="#000" transform="rotate(0 14.5 14.5)"/><rect x="11.5" y="0" width="6" height="7" fill="#000" transform="rotate(45 14.5 14.5)"/><rect x="11.5" y="0" width="6" height="7" fill="#000" transform="rotate(90 14.5 14.5)"/><rect x="11.5" y="0" width="6" height="7" fill="#000" transform="rotate(135 14.5 14.5)"/><rect x="11.5" y="0" width="6" height="7" fill="#000" transform="rotate(180 14.5 14.5)"/><rect x="11.5" y="0" width="6" height="7" fill="#000" transform="rotate(225 14.5 14.5)"/><rect x="11.5" y="0" width="6" height="7" fill="#000" transform="rotate(270 14.5 14.5)"/><rect x="11.5" y="0" width="6" height="7" fill="#000" transform="rotate(315 14.5 14.5)"/><circle cx="14.5" cy="14.5" r="10" fill="#000"/><circle cx="14.5" cy="14.5" r="6" fill="#f0f0f5"/><circle cx="14.5" cy="14.5" r="2.6" fill="#000"/></svg>
<svg style="left:421px;top:86px" width="32" height="26" viewBox="0 0 32 26" ><rect x="1" y="1" width="30" height="23.5" fill="#fff" stroke="#000" stroke-width="1.3"/><rect x="1" y="1" width="30" height="4" fill="#c8c8c8" stroke="#000" stroke-width="1.1"/><path d="M1,10 H31 M1,14.5 H31 M1,19.5 H31 M11,1 V24.5 M21,1 V24.5" stroke="#000" stroke-width="0.9"/></svg>
<div class="a" style="left:456px;top:89px;width:2px;height:19px;background:#8e8e8e"></div>
<svg style="left:459px;top:83px" width="31" height="31" viewBox="0 0 31 31" ><path d="M15.5,3 V28 M3,15.5 H28" stroke="#000" stroke-width="1.3"/><path d="M15.5,0.5 L12.5,5 H18.5Z M15.5,30.5 L12.5,26 H18.5Z M0.5,15.5 L5,12.5 V18.5Z M30.5,15.5 L26,12.5 V18.5Z" fill="#000"/><circle cx="15.5" cy="15.5" r="2.8" fill="#e81010"/></svg>
<div class="a" style="left:494px;top:89px;width:2px;height:19px;background:#8e8e8e"></div>
<svg style="left:499px;top:88px" width="28" height="21" viewBox="0 0 28 21" ><rect x="1.6" y="1.6" width="24.8" height="17.8" fill="#e4e4e4" stroke="#000" stroke-width="2.6"/></svg>
<div class="a" style="left:532px;top:89px;width:2px;height:19px;background:#8e8e8e"></div>
<svg style="left:535px;top:87px" width="32" height="24" viewBox="0 0 32 24" ><rect x="1" y="1" width="10" height="21.5" fill="#cfcfcf" stroke="#333" stroke-width="1"/><rect x="14" y="1" width="17" height="9.5" fill="#cfcfcf" stroke="#333" stroke-width="1"/><rect x="14" y="13" width="17" height="9.5" fill="#cfcfcf" stroke="#333" stroke-width="1"/></svg>
<svg style="left:570px;top:86px" width="26" height="26" viewBox="0 0 26 26" ><circle cx="13" cy="13" r="11.6" fill="none" stroke="#c85a5a" stroke-width="1.5"/><path d="M13,4 V22 M4,13 H22" stroke="#c85a5a" stroke-width="1.4"/><path d="M13,3 L10.5,6.5 H15.5Z M13,23 L10.5,19.5 H15.5Z M3,13 L6.5,10.5 V15.5Z M23,13 L19.5,10.5 V15.5Z" fill="#c85a5a"/></svg>
<div class="t" style="left:599px;top:92px;font-size:13.4px;font-weight:bold;color:#111">.DXF</div>
<svg style="left:633px;top:83px" width="28" height="32" viewBox="0 0 28 32" ><path d="M6,12 V1.5 H17 L22,6.5 V12" fill="#fff" stroke="#000" stroke-width="1.3"/><path d="M17,1.5 V6.5 H22" fill="none" stroke="#000" stroke-width="1"/><rect x="1.5" y="11" width="25" height="13" rx="1.5" fill="#c4c4c4" stroke="#000" stroke-width="1.3"/><rect x="6" y="18" width="16" height="12.5" fill="#fff" stroke="#000" stroke-width="1.3"/><path d="M9,22 H19 M9,25 H19 M9,28 H19" stroke="#000" stroke-width="1"/><path d="M19,13.5 H20.5 M22,13.5 H23.5" stroke="#000" stroke-width="1"/></svg>
<div class="a" style="left:666px;top:89px;width:2px;height:19px;background:#8e8e8e"></div>
<svg style="left:672px;top:86px" width="28" height="25" viewBox="0 0 28 25" ><path d="M1.5,8 L7,2 H26 L20.5,8Z" fill="#cfcfcf" stroke="#000" stroke-width="1.2" stroke-linejoin="round"/><path d="M20.5,8 L26,2 V17 L20.5,23Z" fill="#fff" stroke="#000" stroke-width="1.2" stroke-linejoin="round"/><rect x="1.5" y="8" width="19" height="15" fill="#cfcfcf" stroke="#000" stroke-width="1.2"/></svg>
<svg style="left:704px;top:92px" width="25" height="12" viewBox="0 0 25 12" ><path d="M1,6 H19" stroke="#000" stroke-width="2"/><path d="M24,6 L17,1.5 V10.5Z" fill="#000"/></svg>
<div class="a" style="left:736px;top:89px;width:2px;height:19px;background:#8e8e8e"></div>
<svg style="left:746px;top:87px" width="18" height="22" viewBox="0 0 18 22" ><rect x="6" y="1" width="6" height="11" fill="#c45050"/><path d="M0.5,11 H17.5 L9,20.5Z" fill="#c45050"/></svg>
<svg style="left:775px;top:89px" width="24" height="20" viewBox="0 0 24 20" ><rect x="1.5" y="1.5" width="21" height="16.5" rx="3" fill="none" stroke="#3a3a3a" stroke-width="1.6"/><path d="M9,5.5 L16.5,9.75 L9,14Z" fill="#000"/></svg>
<div class="a" style="left:805px;top:81px;width:2px;height:35px;background:#dcdce3"></div>
<svg style="left:809px;top:89px" width="5" height="21" viewBox="0 0 5 21" ><rect x="0.5" y="1.0" width="1.1" height="1.1" fill="#b4b4bc"/><rect x="3.5" y="1.0" width="1.1" height="1.1" fill="#b4b4bc"/><rect x="0.5" y="4.2" width="1.1" height="1.1" fill="#b4b4bc"/><rect x="3.5" y="4.2" width="1.1" height="1.1" fill="#b4b4bc"/><rect x="0.5" y="7.4" width="1.1" height="1.1" fill="#b4b4bc"/><rect x="3.5" y="7.4" width="1.1" height="1.1" fill="#b4b4bc"/><rect x="0.5" y="10.6" width="1.1" height="1.1" fill="#b4b4bc"/><rect x="3.5" y="10.6" width="1.1" height="1.1" fill="#b4b4bc"/><rect x="0.5" y="13.8" width="1.1" height="1.1" fill="#b4b4bc"/><rect x="3.5" y="13.8" width="1.1" height="1.1" fill="#b4b4bc"/><rect x="0.5" y="17.0" width="1.1" height="1.1" fill="#b4b4bc"/><rect x="3.5" y="17.0" width="1.1" height="1.1" fill="#b4b4bc"/></svg><svg style="left:817px;top:83px" width="32" height="30" viewBox="0 0 32 30" ><path d="M1,5 L5,1 H30 V24 L26,28 H1Z M1,5 H26 V28 M26,5 L30,1" fill="none" stroke="#aaa" stroke-width="0.9"/><circle cx="1" cy="5" r="1" fill="#999"/><circle cx="13" cy="5" r="1" fill="#999"/><circle cx="26" cy="5" r="1" fill="#999"/><circle cx="1" cy="16" r="1" fill="#999"/><circle cx="26" cy="16" r="1" fill="#999"/><circle cx="1" cy="28" r="1" fill="#999"/><circle cx="13" cy="28" r="1" fill="#999"/><circle cx="26" cy="28" r="1" fill="#999"/><circle cx="30" cy="13" r="1" fill="#999"/><circle cx="18" cy="1" r="1" fill="#999"/><g transform="translate(3,1)"><path d="M7,9 L10.5,6 H21 L17.5,9Z" fill="#d8d8d8" stroke="#555" stroke-width="1" stroke-linejoin="round"/><path d="M17.5,9 L21,6 V18.5 L17.5,21.5Z" fill="#d0d0d0" stroke="#555" stroke-width="1" stroke-linejoin="round"/><rect x="7" y="9" width="10.5" height="12.5" fill="#fff" stroke="#555" stroke-width="1"/><circle cx="9" cy="16" r="0.9" fill="#666"/></g></svg>
<svg style="left:850px;top:83px" width="29" height="31" viewBox="0 0 29 31" ><path d="M14.5,0 V30" stroke="#555" stroke-width="2.2"/><path d="M1,14 L28,19 M1,20 L28,13" stroke="#777" stroke-width="1.8"/><g transform="translate(2.5,2)"><path d="M7,9 L10.5,6 H21 L17.5,9Z" fill="#d8d8d8" stroke="#555" stroke-width="1" stroke-linejoin="round"/><path d="M17.5,9 L21,6 V18.5 L17.5,21.5Z" fill="#d0d0d0" stroke="#555" stroke-width="1" stroke-linejoin="round"/><rect x="7" y="9" width="10.5" height="12.5" fill="#fff" stroke="#555" stroke-width="1"/></g><path d="M16.5,4 V7" stroke="#555" stroke-width="2.2"/></svg>
<svg style="left:882px;top:83px" width="30" height="30" viewBox="0 0 30 30" ><path d="M1,14 L29,20" stroke="#777" stroke-width="1.8"/><g transform="translate(3,2)"><path d="M7,9 L10.5,6 H21 L17.5,9Z" fill="#d8d8d8" stroke="#555" stroke-width="1" stroke-linejoin="round"/><path d="M17.5,9 L21,6 V18.5 L17.5,21.5Z" fill="#d0d0d0" stroke="#555" stroke-width="1" stroke-linejoin="round"/><rect x="7" y="9" width="10.5" height="12.5" fill="#fff" stroke="#555" stroke-width="1"/></g><path d="M22,18 L29,20" stroke="#777" stroke-width="1.8"/></svg>
<svg style="left:916px;top:83px" width="26" height="30" viewBox="0 0 26 30" ><path d="M1,22 L25,11" stroke="#888" stroke-width="1.8"/><g transform="translate(0,2)"><path d="M7,9 L10.5,6 H21 L17.5,9Z" fill="#d8d8d8" stroke="#555" stroke-width="1" stroke-linejoin="round"/><path d="M17.5,9 L21,6 V18.5 L17.5,21.5Z" fill="#d0d0d0" stroke="#555" stroke-width="1" stroke-linejoin="round"/><rect x="7" y="9" width="10.5" height="12.5" fill="#fff" stroke="#555" stroke-width="1"/></g><path d="M4,20 L10,17.5" stroke="#888" stroke-width="1.8"/></svg>
<svg style="left:949px;top:83px" width="24" height="31" viewBox="0 0 24 31" ><path d="M12,0 V30" stroke="#555" stroke-width="2.2"/><g transform="translate(-2,3)"><path d="M7,9 L10.5,6 H21 L17.5,9Z" fill="#d8d8d8" stroke="#555" stroke-width="1" stroke-linejoin="round"/><path d="M17.5,9 L21,6 V18.5 L17.5,21.5Z" fill="#d0d0d0" stroke="#555" stroke-width="1" stroke-linejoin="round"/><rect x="7" y="9" width="10.5" height="12.5" fill="#fff" stroke="#555" stroke-width="1"/></g><path d="M12,0 V7 M12,26 V30" stroke="#555" stroke-width="2.2"/></svg>
<div class="a" style="left:980px;top:89px;width:2px;height:19px;background:#8e8e8e"></div>
<svg style="left:983px;top:84px" width="33" height="30" viewBox="0 0 33 30" ><path d="M16,23 L12,21 M13,22 L10,29 M13,22 L15,29" fill="none" stroke="#555" stroke-width="1.1"/><rect x="3" y="12" width="11" height="10" rx="2" fill="#fff" stroke="#555" stroke-width="1.1" transform="rotate(-20 8 17)"/><circle cx="5" cy="12" r="2.5" fill="#fff" stroke="#555" stroke-width="1"/><circle cx="10" cy="10" r="2.5" fill="#fff" stroke="#555" stroke-width="1"/><path d="M14,14 L19,10 V18Z" fill="#fff" stroke="#555" stroke-width="1"/><path d="M21,12 L25,10" stroke="#777" stroke-width="1" stroke-dasharray="1.5,1"/><path d="M23,3 L26,1 H31 V10 L28,13 H23Z" fill="#bbb" stroke="#555" stroke-width="1"/><rect x="23" y="3" width="5" height="10" fill="#d8d8d8" stroke="#555" stroke-width="1"/></svg>
<div class="a" style="left:1018px;top:81px;width:2px;height:35px;background:#dcdce3"></div>
<svg style="left:1021px;top:89px" width="5" height="21" viewBox="0 0 5 21" ><rect x="0.5" y="1.0" width="1.1" height="1.1" fill="#b4b4bc"/><rect x="3.5" y="1.0" width="1.1" height="1.1" fill="#b4b4bc"/><rect x="0.5" y="4.2" width="1.1" height="1.1" fill="#b4b4bc"/><rect x="3.5" y="4.2" width="1.1" height="1.1" fill="#b4b4bc"/><rect x="0.5" y="7.4" width="1.1" height="1.1" fill="#b4b4bc"/><rect x="3.5" y="7.4" width="1.1" height="1.1" fill="#b4b4bc"/><rect x="0.5" y="10.6" width="1.1" height="1.1" fill="#b4b4bc"/><rect x="3.5" y="10.6" width="1.1" height="1.1" fill="#b4b4bc"/><rect x="0.5" y="13.8" width="1.1" height="1.1" fill="#b4b4bc"/><rect x="3.5" y="13.8" width="1.1" height="1.1" fill="#b4b4bc"/><rect x="0.5" y="17.0" width="1.1" height="1.1" fill="#b4b4bc"/><rect x="3.5" y="17.0" width="1.1" height="1.1" fill="#b4b4bc"/></svg>
<svg style="left:1029px;top:82px" width="33" height="33" viewBox="0 0 33 33" ><rect x="1" y="1" width="20" height="3" rx="1" fill="#1a5a90"/><path d="M5,4 H17 L15,7 H7Z" fill="#2a2a2a"/><path d="M7,7 H15 L13.5,11 H8.5Z" fill="#1a6fb0"/><path d="M8.5,11 H13.5 L11,19Z" fill="#2aa0e8"/><path d="M11,18 V32" stroke="#333" stroke-width="2.6"/><path d="M9.5,20 L12.5,21 M9.5,23 L12.5,24 M9.5,26 L12.5,27 M9.5,29 L12.5,30" stroke="#888" stroke-width="0.8"/><text x="0" y="0" transform="translate(30.5,31) rotate(-90)" font-family="Liberation Sans" font-weight="bold" font-size="12.5" fill="#e8141c">ABF</text><rect x="26" y="1" width="1.6" height="4" fill="#e8141c"/></svg>
<div class="a" style="left:1063px;top:81px;width:2px;height:35px;background:#dcdce3"></div>
<svg style="left:1066px;top:89px" width="5" height="21" viewBox="0 0 5 21" ><rect x="0.5" y="1.0" width="1.1" height="1.1" fill="#b4b4bc"/><rect x="3.5" y="1.0" width="1.1" height="1.1" fill="#b4b4bc"/><rect x="0.5" y="4.2" width="1.1" height="1.1" fill="#b4b4bc"/><rect x="3.5" y="4.2" width="1.1" height="1.1" fill="#b4b4bc"/><rect x="0.5" y="7.4" width="1.1" height="1.1" fill="#b4b4bc"/><rect x="3.5" y="7.4" width="1.1" height="1.1" fill="#b4b4bc"/><rect x="0.5" y="10.6" width="1.1" height="1.1" fill="#b4b4bc"/><rect x="3.5" y="10.6" width="1.1" height="1.1" fill="#b4b4bc"/><rect x="0.5" y="13.8" width="1.1" height="1.1" fill="#b4b4bc"/><rect x="3.5" y="13.8" width="1.1" height="1.1" fill="#b4b4bc"/><rect x="0.5" y="17.0" width="1.1" height="1.1" fill="#b4b4bc"/><rect x="3.5" y="17.0" width="1.1" height="1.1" fill="#b4b4bc"/></svg>
<div class="a" style="left:1075px;top:88px;width:164px;height:20px;border:1px solid #a9a9ae;border-radius:3px;background:#fff"></div>
<svg style="left:1082px;top:95px" width="13" height="10" viewBox="0 0 13 10" ><path d="M1,5 L4.5,8.5 L12,1" fill="none" stroke="#000" stroke-width="1.8"/></svg>
<div class="t" style="left:1098px;top:93px;font-size:12.6px;color:#222">Untagged</div>
<svg style="left:1225px;top:96px" width="9" height="6" viewBox="0 0 9 6" ><path d="M0,0 H8.5 L4.25,5Z" fill="#666"/></svg>
<div class="a" style="left:1244px;top:81px;width:2px;height:35px;background:#dcdce3"></div>
<svg style="left:1247px;top:89px" width="5" height="21" viewBox="0 0 5 21" ><rect x="0.5" y="1.0" width="1.1" height="1.1" fill="#b4b4bc"/><rect x="3.5" y="1.0" width="1.1" height="1.1" fill="#b4b4bc"/><rect x="0.5" y="4.2" width="1.1" height="1.1" fill="#b4b4bc"/><rect x="3.5" y="4.2" width="1.1" height="1.1" fill="#b4b4bc"/><rect x="0.5" y="7.4" width="1.1" height="1.1" fill="#b4b4bc"/><rect x="3.5" y="7.4" width="1.1" height="1.1" fill="#b4b4bc"/><rect x="0.5" y="10.6" width="1.1" height="1.1" fill="#b4b4bc"/><rect x="3.5" y="10.6" width="1.1" height="1.1" fill="#b4b4bc"/><rect x="0.5" y="13.8" width="1.1" height="1.1" fill="#b4b4bc"/><rect x="3.5" y="13.8" width="1.1" height="1.1" fill="#b4b4bc"/><rect x="0.5" y="17.0" width="1.1" height="1.1" fill="#b4b4bc"/><rect x="3.5" y="17.0" width="1.1" height="1.1" fill="#b4b4bc"/></svg>
<svg style="left:1254px;top:82px" width="34" height="28" viewBox="0 0 34 28" ><g fill="none" stroke="#0c0c90" stroke-linecap="round"><path d="M15.5,3.5 Q10,0.5 6,4.5 Q2,9 3,13.5 Q5,19 11,19 Q16,18.5 16.5,15 Q16.5,12.5 13.5,12.5 Q11.5,13 12.5,15" stroke-width="2.4"/><path d="M15.5,3.5 Q18,6 16,8 Q13.5,9.5 12.5,7.5 Q12.5,6 14,6" stroke-width="1.8"/><path d="M19.5,10 Q22,7.5 25,8.5 Q27,10.5 25,13 Q22,14 20.5,13 Q22,11.5 24,13 Q26.5,15 25.5,19 Q24,23 21,25.5 Q19,26.5 20,24 Q22,21 26,18 L29.5,15" stroke-width="2.2"/></g></svg>
<div class="a" style="left:1256px;top:109px;width:31px;height:6px;background:#ff10c8"></div>
<div class="a" style="left:1290px;top:89px;width:2px;height:19px;background:#8e8e8e"></div>
<div class="a" style="left:1295px;top:81px;width:2px;height:35px;background:#dcdce3"></div>
<svg style="left:1299px;top:89px" width="5" height="21" viewBox="0 0 5 21" ><rect x="0.5" y="1.0" width="1.1" height="1.1" fill="#b4b4bc"/><rect x="3.5" y="1.0" width="1.1" height="1.1" fill="#b4b4bc"/><rect x="0.5" y="4.2" width="1.1" height="1.1" fill="#b4b4bc"/><rect x="3.5" y="4.2" width="1.1" height="1.1" fill="#b4b4bc"/><rect x="0.5" y="7.4" width="1.1" height="1.1" fill="#b4b4bc"/><rect x="3.5" y="7.4" width="1.1" height="1.1" fill="#b4b4bc"/><rect x="0.5" y="10.6" width="1.1" height="1.1" fill="#b4b4bc"/><rect x="3.5" y="10.6" width="1.1" height="1.1" fill="#b4b4bc"/><rect x="0.5" y="13.8" width="1.1" height="1.1" fill="#b4b4bc"/><rect x="3.5" y="13.8" width="1.1" height="1.1" fill="#b4b4bc"/><rect x="0.5" y="17.0" width="1.1" height="1.1" fill="#b4b4bc"/><rect x="3.5" y="17.0" width="1.1" height="1.1" fill="#b4b4bc"/></svg>
<svg style="left:1311px;top:86px" width="24" height="25" viewBox="0 0 24 25" ><defs><radialGradient id="rk" cx="0.5" cy="0.6" r="0.6"><stop offset="0" stop-color="#fff4f0"/><stop offset="1" stop-color="#d8a898"/></radialGradient></defs><path d="M3,5 Q10,0 21,3 Q24,8 21,17 Q16,23 9,23 Q4,19 4,14 Q1,12 3,9Z" fill="url(#rk)" stroke="#111" stroke-width="1.2"/><path d="M10,3 Q9,10 11,15 Q9,19 10,23 M15,2 Q14,9 16,13 Q15,18 16,22 M19,3 Q18,8 19,13" fill="none" stroke="#333" stroke-width="0.7"/></svg>
<svg style="left:1342px;top:86px" width="26" height="25" viewBox="0 0 26 25" ><path d="M7,13 Q8,1 15,1 Q20,1 20,16" fill="none" stroke="#f07070" stroke-width="1.3"/><path d="M1.5,12.5 H8.5 L10.5,20.5 H1.5Z" fill="#20a050" stroke="#222" stroke-width="1"/><circle cx="20" cy="20" r="4.5" fill="#f8b800" stroke="#333" stroke-width="1"/></svg>
<svg style="left:1374px;top:85px" width="26" height="27" viewBox="0 0 26 27" ><g fill="none" stroke="#20a020" stroke-width="1.2" stroke-linejoin="round"><path d="M2,11 L8,6 L15,1 L24,11 L23,21 L13,26 L5,22 L2,16Z"/><path d="M8,6 L9,13 L13,26 M9,13 L15,11 L24,11 M15,11 L15,1 M2,16 L9,13 M15,20 L18,15 L23,21 M13,26 L15,20 L9,13"/></g></svg>
<div class="a" style="left:1405px;top:81px;width:2px;height:35px;background:#dcdce3"></div>
<svg style="left:1408px;top:89px" width="5" height="21" viewBox="0 0 5 21" ><rect x="0.5" y="1.0" width="1.1" height="1.1" fill="#b4b4bc"/><rect x="3.5" y="1.0" width="1.1" height="1.1" fill="#b4b4bc"/><rect x="0.5" y="4.2" width="1.1" height="1.1" fill="#b4b4bc"/><rect x="3.5" y="4.2" width="1.1" height="1.1" fill="#b4b4bc"/><rect x="0.5" y="7.4" width="1.1" height="1.1" fill="#b4b4bc"/><rect x="3.5" y="7.4" width="1.1" height="1.1" fill="#b4b4bc"/><rect x="0.5" y="10.6" width="1.1" height="1.1" fill="#b4b4bc"/><rect x="3.5" y="10.6" width="1.1" height="1.1" fill="#b4b4bc"/><rect x="0.5" y="13.8" width="1.1" height="1.1" fill="#b4b4bc"/><rect x="3.5" y="13.8" width="1.1" height="1.1" fill="#b4b4bc"/><rect x="0.5" y="17.0" width="1.1" height="1.1" fill="#b4b4bc"/><rect x="3.5" y="17.0" width="1.1" height="1.1" fill="#b4b4bc"/></svg>
<svg style="left:1417px;top:84px" width="31" height="29" viewBox="0 0 31 29" ><rect x="1" y="6" width="4" height="16" fill="#aaa"/><rect x="26" y="6" width="4" height="16" fill="#aaa"/><path d="M8,6 H22 L24,22 H7Z" fill="#3c3c3c"/><path d="M7,3 L5,26 M24,3 L26,26" stroke="#f0f0f5" stroke-width="0"/><path d="M7,3 H21 L25,26 H5Z" fill="none" stroke="#d83a3a" stroke-width="1.6"/><circle cx="7" cy="3" r="2.4" fill="#fff" stroke="#d83a3a" stroke-width="1.2"/><circle cx="21" cy="3" r="2.4" fill="#fff" stroke="#d83a3a" stroke-width="1.2"/><circle cx="5" cy="26" r="2.4" fill="#fff" stroke="#d83a3a" stroke-width="1.2"/><circle cx="25" cy="26" r="2.4" fill="#fff" stroke="#d83a3a" stroke-width="1.2"/></svg>
<div class="a" style="left:1451px;top:81px;width:2px;height:35px;background:#dcdce3"></div>
<svg style="left:1455px;top:89px" width="5" height="21" viewBox="0 0 5 21" ><rect x="0.5" y="1.0" width="1.1" height="1.1" fill="#b4b4bc"/><rect x="3.5" y="1.0" width="1.1" height="1.1" fill="#b4b4bc"/><rect x="0.5" y="4.2" width="1.1" height="1.1" fill="#b4b4bc"/><rect x="3.5" y="4.2" width="1.1" height="1.1" fill="#b4b4bc"/><rect x="0.5" y="7.4" width="1.1" height="1.1" fill="#b4b4bc"/><rect x="3.5" y="7.4" width="1.1" height="1.1" fill="#b4b4bc"/><rect x="0.5" y="10.6" width="1.1" height="1.1" fill="#b4b4bc"/><rect x="3.5" y="10.6" width="1.1" height="1.1" fill="#b4b4bc"/><rect x="0.5" y="13.8" width="1.1" height="1.1" fill="#b4b4bc"/><rect x="3.5" y="13.8" width="1.1" height="1.1" fill="#b4b4bc"/><rect x="0.5" y="17.0" width="1.1" height="1.1" fill="#b4b4bc"/><rect x="3.5" y="17.0" width="1.1" height="1.1" fill="#b4b4bc"/></svg>
<svg style="left:1467px;top:88px" width="14" height="22" viewBox="0 0 14 22" ><path d="M0,8 L6,2 H14 V12 L8,18 H0Z" fill="#b89458" stroke="#5a4020" stroke-width="0.8"/><path d="M0,8 L6,2 H14 V8 L8,12 H0Z" fill="#f8c010" stroke="#806000" stroke-width="0.8"/></svg><div class="a" style="left:69px;top:117px;width:1.4px;height:32px;background:#111"></div>
<svg style="left:91px;top:123px" width="20" height="21" viewBox="0 0 20 21" ><circle cx="12.6" cy="8.2" r="5.6" fill="none" stroke="#000" stroke-width="2.2"/><path d="M8.6,12.3 L2.5,18.5" stroke="#000" stroke-width="2.4"/></svg>
<div class="a" style="left:133px;top:122px;width:39px;height:27px;background:#e1e1e6;border:1px solid #c9c9d0;border-bottom:none;border-radius:3px 3px 0 0"></div>
<div class="a" style="left:173px;top:122px;width:114px;height:27px;background:#e1e1e6;border:1px solid #c9c9d0;border-bottom:none;border-radius:3px 3px 0 0"></div>
<div class="a" style="left:288px;top:120px;width:62px;height:29px;background:#f6f6f9;border:1px solid #c9c9d0;border-bottom:none;border-radius:3px 3px 0 0"></div>
<div class="t" style="left:145px;top:130px;font-size:12.4px;color:#4a4a55">3D</div>
<div class="t" style="left:185px;top:130px;font-size:12.4px;color:#4a4a55;letter-spacing:-0.5px">3D KÍCH THƯỚC</div>
<div class="t" style="left:300px;top:129px;font-size:12.4px;color:#4a4a55;letter-spacing:-0.5px">3D LẮP</div>
<div class="a" style="left:0px;top:117px;width:69px;height:752px;border-right:1px solid #dcdce3;border-top:1px solid #dcdce3;box-sizing:border-box"></div>
<svg style="left:27px;top:120px" width="17" height="5" viewBox="0 0 17 5" ><rect x="0.5" y="0.5" width="1.1" height="1.1" fill="#a8a8b0"/><rect x="0.5" y="3" width="1.1" height="1.1" fill="#a8a8b0"/><rect x="3.5" y="0.5" width="1.1" height="1.1" fill="#a8a8b0"/><rect x="3.5" y="3" width="1.1" height="1.1" fill="#a8a8b0"/><rect x="6.5" y="0.5" width="1.1" height="1.1" fill="#a8a8b0"/><rect x="6.5" y="3" width="1.1" height="1.1" fill="#a8a8b0"/><rect x="9.5" y="0.5" width="1.1" height="1.1" fill="#a8a8b0"/><rect x="9.5" y="3" width="1.1" height="1.1" fill="#a8a8b0"/><rect x="12.5" y="0.5" width="1.1" height="1.1" fill="#a8a8b0"/><rect x="12.5" y="3" width="1.1" height="1.1" fill="#a8a8b0"/><rect x="15.5" y="0.5" width="1.1" height="1.1" fill="#a8a8b0"/><rect x="15.5" y="3" width="1.1" height="1.1" fill="#a8a8b0"/></svg>
<div class="a" style="left:3px;top:129px;width:29px;height:29px;background:#dce9f6;border:1px solid #3b82c8;border-radius:4px"></div>
<svg style="left:13px;top:138px" width="11" height="15" viewBox="0 0 11 15" ><path d="M0,0 L9,8 L5.2,8.6 L7.5,13.5 L5.6,14.4 L3.3,9.6 L0,12.3Z" fill="#1b3d6a"/></svg>
<svg style="left:38px;top:132px" width="21" height="24" viewBox="0 0 21 24" ><path d="M8,5 Q2,8 3,13 Q4,16 6,17 Q3,20 2,22 Q9,21 13,18 Q19,15 18,9 Q17,5 13,5" fill="none" stroke="#1f9ad8" stroke-width="1.3" stroke-dasharray="2.2,1.4"/><g transform="translate(6,1) scale(0.85)"><path d="M0,0 L9,8 L5.2,8.6 L7.5,13.5 L5.6,14.4 L3.3,9.6 L0,12.3Z" fill="#1b3d6a"/></g></svg>
<svg style="left:6px;top:165px" width="23" height="22" viewBox="0 0 23 22" ><path d="M9,5 L3,11 L11,19 Q13,20 15,19 L19,15 Q20,13 19,11 Z" fill="#dde9f6" stroke="#1b3d6a" stroke-width="1.2" stroke-linejoin="round"/><path d="M9,5 Q13,1 17,3 Q21,6 17,11 L13,14" fill="none" stroke="#1b3d6a" stroke-width="1.1"/><path d="M8,3 Q3,5 2,10 Q1,16 2,18 Q5,16 7,10 Z" fill="#1f9ad8"/></svg>
<svg style="left:38px;top:165px" width="22" height="22" viewBox="0 0 22 22" ><path d="M1,13 L12,2 L20,10 L9,21Z" fill="#dde9f6" stroke="#1b3d6a" stroke-width="1.1" stroke-linejoin="round"/><path d="M6,8 L11,3 L19,11 L14,16Z" fill="#1f9ad8" opacity="0"/><path d="M5,9 L9,5 L17,13 L13,17Z" fill="#1f9ad8"/><rect x="2" y="20" width="18" height="2" fill="#5ab8e8"/></svg>
<svg style="left:8px;top:199px" width="20" height="19" viewBox="0 0 20 19" ><g fill="#dde9f6" stroke="#1b3d6a" stroke-width="1.1" stroke-linejoin="round"><path d="M7,3 L10,1.5 L13,3 V7 L10,8.5 L7,7Z"/><path d="M2,10 L5,8.5 L8,10 V14 L5,15.5 L2,14Z"/><path d="M11,10 L14,8.5 L17,10 V14 L14,15.5 L11,14Z"/></g><path d="M7,3 L10,4.5 L13,3 M10,4.5 V8.5 M2,10 L5,11.5 L8,10 M5,11.5 V15.5 M11,10 L14,11.5 L17,10 M14,11.5 V15.5" fill="none" stroke="#1b3d6a" stroke-width="0.9"/></svg>
<svg style="left:41px;top:200px" width="20" height="20" viewBox="0 0 20 20" ><path d="M2,10 L10,2 H17 V9 L9,17 H2Z" fill="#dde9f6" stroke="#1b3d6a" stroke-width="1.3" stroke-linejoin="round"/><circle cx="5.6" cy="13.5" r="1.1" fill="none" stroke="#1f9ad8" stroke-width="0.9"/></svg>
<div class="a" style="left:8px;top:227px;width:52px;height:2px;background:#8a8a8a"></div>
<svg style="left:7px;top:235px" width="22" height="22" viewBox="0 0 22 22" ><path d="M6,15 L17,2 Q19,1 20,3 L8,17Z" fill="#fff" stroke="#f01010" stroke-width="1.3" stroke-linejoin="round"/><path d="M6,15 L8,17 L1,20Z" fill="#1b3d6a"/></svg>
<svg style="left:39px;top:235px" width="22" height="23" viewBox="0 0 22 23" ><path d="M3,18 Q9,16 7,11 Q5,6 11,5 Q17,4 13,10 Q10,15 15,17 Q19,17 17,11 Q16,7 18,4" fill="none" stroke="#1f9ad8" stroke-width="1.2"/><circle cx="3.5" cy="18.5" r="2" fill="#1b3d6a"/><circle cx="18" cy="3.5" r="2.4" fill="#f01010"/></svg>
<svg style="left:7px;top:267px" width="23" height="22" viewBox="0 0 23 22" ><rect x="2.5" y="3" width="16" height="16" fill="#dde9f6" stroke="#1f9ad8" stroke-width="1.3"/><path d="M3.5,18.5 L17.5,4" stroke="#1b3d6a" stroke-width="1.1"/><circle cx="3.5" cy="18.5" r="2" fill="#1b3d6a"/><circle cx="18" cy="3.8" r="2.6" fill="#f01010"/></svg>
<svg style="left:39px;top:266px" width="22" height="23" viewBox="0 0 22 23" ><rect x="3.5" y="1.5" width="15" height="17" fill="#dde9f6" stroke="#1f9ad8" stroke-width="1.3" stroke-dasharray="13,3"/><path d="M3.5,6 Q16,7 18,19" fill="none" stroke="#1b3d6a" stroke-width="1.1"/><circle cx="3.5" cy="19" r="1.9" fill="#1b3d6a"/><circle cx="18.5" cy="19" r="1.9" fill="#1b3d6a"/><circle cx="3.5" cy="6" r="2.8" fill="#f01010"/></svg>
<svg style="left:7px;top:299px" width="22" height="22" viewBox="0 0 22 22" ><circle cx="11" cy="11" r="9.6" fill="#dde9f6" stroke="#1f9ad8" stroke-width="1.3"/><path d="M11,11 L18,4" stroke="#1b3d6a" stroke-width="1.1"/><circle cx="11" cy="11" r="1.9" fill="#1b3d6a"/><circle cx="18" cy="4" r="2.5" fill="#f01010"/></svg>
<svg style="left:38px;top:299px" width="23" height="22" viewBox="0 0 23 22" ><path d="M6,2 H16 L21.5,11 L16,20 H6 L0.5,11Z" fill="#dde9f6" stroke="#1f9ad8" stroke-width="1.2" stroke-linejoin="round"/><path d="M11.5,11 L16,4" stroke="#1b3d6a" stroke-width="1.1"/><circle cx="11.5" cy="11" r="1.9" fill="#1b3d6a"/><circle cx="16.5" cy="3.5" r="2.5" fill="#f01010"/></svg>
<svg style="left:7px;top:332px" width="22" height="22" viewBox="0 0 22 22" ><path d="M3,19 L3,3" stroke="#1b3d6a" stroke-width="1.1"/><path d="M3,19 L18,4" stroke="#1b3d6a" stroke-width="1.1"/><path d="M18,4 Q18,17 5,19.5" fill="none" stroke="#1f9ad8" stroke-width="1.4"/><circle cx="3" cy="3" r="1.8" fill="#1b3d6a"/><circle cx="3" cy="19" r="2" fill="#1b3d6a"/><circle cx="18" cy="4" r="2.5" fill="#f01010"/></svg>
<svg style="left:39px;top:332px" width="22" height="22" viewBox="0 0 22 22" ><path d="M3,4 Q3,14 4,18 M3,4 Q11,-1 18,4" fill="none" stroke="#1f9ad8" stroke-width="1.3"/><path d="M4,18 L18,4 M3,4 L10,10" stroke="#1b3d6a" stroke-width="1.1"/><circle cx="4" cy="18" r="1.9" fill="#1b3d6a"/><circle cx="18" cy="4" r="1.9" fill="#1b3d6a"/><circle cx="3" cy="4" r="2.5" fill="#f01010"/></svg>
<svg style="left:7px;top:363px" width="22" height="22" viewBox="0 0 22 22" ><path d="M8,3 Q19,5 17,15 Q14,21 6,18" fill="none" stroke="#1f9ad8" stroke-width="1.3"/><path d="M8,3 L17,15 L3,13" fill="none" stroke="#1b3d6a" stroke-width="1.1"/><circle cx="3" cy="13" r="1.9" fill="#1b3d6a"/><circle cx="17" cy="15" r="1.9" fill="#1b3d6a"/><circle cx="8" cy="3" r="2.5" fill="#f01010"/></svg>
<svg style="left:39px;top:363px" width="22" height="22" viewBox="0 0 22 22" ><path d="M3,3 H18 L4,19Z" fill="#dde9f6"/><path d="M3,3 V19 M3,3 H18 M3,19 L18,3" stroke="#1b3d6a" stroke-width="1.1"/><path d="M18,3 Q18,15 4,19" fill="none" stroke="#1f9ad8" stroke-width="1.4"/><circle cx="3" cy="3" r="1.9" fill="#1b3d6a"/><circle cx="3" cy="19" r="1.9" fill="#1b3d6a"/><circle cx="18" cy="3" r="2.6" fill="#f01010"/></svg>
<div class="a" style="left:8px;top:393px;width:52px;height:2px;background:#8a8a8a"></div>
<svg style="left:7px;top:400px" width="22" height="23" viewBox="0 0 22 23" ><path d="M11,3 V20 M2,11.5 H20" stroke="#f01010" stroke-width="1.4" stroke-dasharray="2,1.5"/><path d="M11,0 L7.5,5 H14.5Z M11,23 L7.5,18 H14.5Z M0,11.5 L5,8 V15Z M22,11.5 L17,8 V15Z" fill="#f01010"/></svg>
<svg style="left:38px;top:400px" width="23" height="23" viewBox="0 0 23 23" ><path d="M1,13 L11,8 L22,13 L12,18Z" fill="#dde9f6" stroke="#1f9ad8" stroke-width="1.2" stroke-linejoin="round"/><path d="M1,13 V16 L12,21 L22,16 V13 M12,18 V21" fill="none" stroke="#1f9ad8" stroke-width="1.2"/><path d="M9.5,14 V7 H6.5 L11.5,1 L16.5,7 H13.5 V14Z" fill="#f01010"/></svg>
<svg style="left:8px;top:434px" width="21" height="22" viewBox="0 0 21 22" ><path d="M3.5,13 A7.5,7.5 0 0 1 15,4" fill="none" stroke="#f01010" stroke-width="1.5"/><path d="M17.5,9 A7.5,7.5 0 0 1 6,18" fill="none" stroke="#f01010" stroke-width="1.5"/><path d="M13,0.5 L19,4.5 L13,8Z M8,13.5 L2,17.5 L8,21Z" fill="#f01010"/></svg>
<svg style="left:38px;top:433px" width="23" height="22" viewBox="0 0 23 22" ><path d="M4,6 Q1,9 2,13 L8,20 L12,16 Q6,10 9,6Z" fill="#dde9f6" stroke="#1f9ad8" stroke-width="1.2" stroke-linejoin="round"/><ellipse cx="10" cy="18" rx="3" ry="2" transform="rotate(-45 10 18)" fill="#dde9f6" stroke="#1f9ad8" stroke-width="1.1"/><path d="M5,5 Q11,1 16,5" fill="none" stroke="#1b3d6a" stroke-width="1.2"/><circle cx="19" cy="8" r="2.6" fill="#f01010"/></svg>
<svg style="left:7px;top:465px" width="23" height="22" viewBox="0 0 23 22" ><rect x="1.5" y="1.5" width="20" height="19" fill="#dde9f6" stroke="#1f9ad8" stroke-width="1.3"/><path d="M1.5,6 H14 V20.5" fill="none" stroke="#1b3d6a" stroke-width="1.4"/><rect x="1.5" y="6" width="12.5" height="14.5" fill="none" stroke="#1b3d6a" stroke-width="1.4"/><path d="M10,12 L16,6 L13,5 L20,2 L18,9 L17,7 L11,13Z" fill="#f01010"/></svg>
<svg style="left:39px;top:465px" width="22" height="22" viewBox="0 0 22 22" ><path d="M2,7 Q10,-2 20,6 Q21,14 17,20" fill="none" stroke="#1f9ad8" stroke-width="1.3"/><path d="M5,16 Q5,8 12,7 Q14,16 12,21" fill="none" stroke="#1b3d6a" stroke-width="1.3"/><path d="M9,12 L15,6 L12,5 L20,2 L18,10 L17,8 L11,14Z" fill="#f01010"/></svg>
<svg style="left:7px;top:496px" width="22" height="24" viewBox="0 0 22 24" ><path d="M11,12 V1" stroke="#1f9ad8" stroke-width="1.4"/><path d="M11,0 L8.5,5 H13.5Z" fill="#1f9ad8"/><path d="M11,12 L20,5" stroke="#2a9a40" stroke-width="1.4"/><path d="M21,4 L15.5,5.5 L18.5,9Z" fill="#2a9a40"/><path d="M11,12 L20,20" stroke="#f01010" stroke-width="1.4"/><path d="M21,21 L15.5,19.5 L18.5,16Z" fill="#f01010"/><path d="M11,12 V23 M11,12 L2,6 M11,12 L3,18" stroke="#777" stroke-width="1" stroke-dasharray="1.5,1.5"/><path d="M2,6 L7,9" stroke="#f01010" stroke-width="1" stroke-dasharray="1.5,1.5"/><path d="M3,18 L7,15" stroke="#2a9a40" stroke-width="1" stroke-dasharray="1.5,1.5"/><circle cx="11" cy="12" r="3.2" fill="#1b3d6a"/></svg>
<svg style="left:38px;top:497px" width="23" height="20" viewBox="0 0 23 20" ><path d="M1.5,18 L9.5,5 V18Z" fill="#fff" stroke="#1b3d6a" stroke-width="1.3" stroke-linejoin="round"/><path d="M13.5,5 L21.5,18 H13.5Z" fill="#dde9f6" stroke="#1f9ad8" stroke-width="1.3" stroke-linejoin="round"/><path d="M11.5,0 V20" stroke="#f07070" stroke-width="1.6" stroke-dasharray="2,1"/></svg>
<div class="a" style="left:8px;top:527px;width:52px;height:2px;background:#8a8a8a"></div><svg style="left:8px;top:535px" width="20" height="22" viewBox="0 0 20 22" ><rect x="5" y="2" width="13" height="12" rx="3" transform="rotate(-20 11.5 8)" fill="#dde9f6" stroke="#1b3d6a" stroke-width="1.3"/><circle cx="11.5" cy="9" r="3.2" fill="#f01010"/><path d="M1,20 L10,15" stroke="#1b3d6a" stroke-width="1.2"/></svg>
<svg style="left:39px;top:535px" width="22" height="22" viewBox="0 0 22 22" ><path d="M2,12 L15,3 M6,16 L19,7" stroke="#1b3d6a" stroke-width="1.1"/><path d="M4,9 L8,15 M13,1 L17,7" stroke="#1b3d6a" stroke-width="1.1"/><text x="9" y="9" font-size="6" font-family="Liberation Sans" fill="#1b3d6a" transform="rotate(-35 9 7)">5</text><circle cx="19" cy="8" r="2.5" fill="#f01010"/><circle cx="9" cy="18" r="2.6" fill="#f01010"/></svg>
<svg style="left:8px;top:563px" width="21" height="25" viewBox="0 0 21 25" ><path d="M2,22 L19,5 A12,12 0 0 0 2,22Z" fill="#dde9f6" stroke="#1b3d6a" stroke-width="1.6" stroke-linejoin="round"/><path d="M6,18 L15,9 A7,7 0 0 0 6,18Z" fill="none" stroke="#1b3d6a" stroke-width="1.1"/><path d="M4,13 L6,14 M7,8 L9,10 M12,5 L13,7" stroke="#1b3d6a" stroke-width="0.8"/></svg>
<svg style="left:38px;top:566px" width="24" height="24" viewBox="0 0 24 24" ><rect x="7" y="1" width="15.5" height="14" rx="1" fill="#fff" stroke="#1b3d6a" stroke-width="1.3"/><text x="9.5" y="12" font-size="8.5" font-family="Liberation Serif" font-weight="bold" fill="#1b3d6a">A1</text><path d="M7,9 H3 V20" fill="none" stroke="#1b3d6a" stroke-width="1.2"/><path d="M0.5,18 L3,23 L5.5,18Z" fill="#1b3d6a"/></svg>
<svg style="left:6px;top:598px" width="24" height="23" viewBox="0 0 24 23" ><circle cx="11" cy="11.5" r="8.5" fill="#fff" stroke="#1b3d6a" stroke-width="1.3"/><path d="M1,11.5 H21" stroke="#1b3d6a" stroke-width="1.3"/><path d="M23,11.5 L17,6 M23,11.5 L17,17" stroke="#1b3d6a" stroke-width="1.5"/><text x="9" y="9.5" font-size="5" font-family="Liberation Sans" fill="#1b3d6a">C</text><text x="7" y="17" font-size="4.5" font-family="Liberation Sans" fill="#1b3d6a">A-B</text></svg>
<svg style="left:41px;top:598px" width="17" height="23" viewBox="0 0 17 23" ><path d="M1,21 L8,1 H11 L16,21 H12.5 L11,16 H6 L4.5,21Z" fill="#fff" stroke="#1f9ad8" stroke-width="1.2" stroke-linejoin="round"/><path d="M8,1 L5,21 M11,1 L14,21" stroke="#1f9ad8" stroke-width="2.2"/><path d="M6.5,12 H10" stroke="#1f9ad8" stroke-width="1"/></svg>
<div class="a" style="left:8px;top:629px;width:52px;height:2px;background:#8a8a8a"></div>
<svg style="left:7px;top:636px" width="22" height="22" viewBox="0 0 22 22" ><path d="M11,1 V21" stroke="#1b3d6a" stroke-width="1.5"/><path d="M8,8 Q1,9 1,12 Q1,16 11,16 Q21,16 21,12 Q21,9 14,8" fill="none" stroke="#f01010" stroke-width="2.6"/><path d="M14,8 V5 M8,8 V11" stroke="#f01010" stroke-width="0"/><path d="M8,5 L3,9 L8,11Z" fill="#f01010"/></svg>
<svg style="left:40px;top:637px" width="19" height="22" viewBox="0 0 19 22" ><path d="M4,9 V3 Q5.5,1 7,3 V8 M7,7 Q8.5,5.5 10,7 V9 M10,8 Q11.5,7 13,8.5 V10 Q14.5,9 16,11 V15 Q15,21 9,21 Q5,20 2,14 Q1,11 4,12 L6,14" fill="#dde9f6" stroke="#1b3d6a" stroke-width="1.1" stroke-linejoin="round"/><path d="M1,3.5 H17" stroke="#f01010" stroke-width="1.4"/><path d="M0,3.5 L4,1 V6Z M18,3.5 L14,1 V6Z" fill="#f01010"/></svg>
<svg style="left:7px;top:668px" width="22" height="23" viewBox="0 0 22 23" ><circle cx="13" cy="8.5" r="7" fill="none" stroke="#1b3d6a" stroke-width="1.6"/><path d="M8,13.5 L2,20" stroke="#1b3d6a" stroke-width="2.8" stroke-linecap="round"/></svg>
<svg style="left:38px;top:668px" width="24" height="24" viewBox="0 0 24 24" ><rect x="1" y="1" width="22" height="22" fill="none" stroke="#1f9ad8" stroke-width="1.2" stroke-dasharray="1.5,1"/><circle cx="14" cy="9.5" r="6" fill="none" stroke="#1b3d6a" stroke-width="1.5"/><path d="M10,14 L4.5,19.5" stroke="#1b3d6a" stroke-width="2.5" stroke-linecap="round"/></svg>
<svg style="left:6px;top:701px" width="23" height="23" viewBox="0 0 23 23" ><circle cx="11.5" cy="11" r="5" fill="none" stroke="#1b3d6a" stroke-width="1.5"/><path d="M8,14.5 L2,20.5" stroke="#1b3d6a" stroke-width="2.4" stroke-linecap="round"/><path d="M1,1 L5,2 L2,5Z M22,1 L18,2 L21,5Z M22,22 L18,21 L21,18Z" fill="#f01010"/><path d="M2,2 L6,6 M21,2 L17,6 M21,21 L17,17" stroke="#f01010" stroke-width="1.6"/></svg>
<svg style="left:39px;top:702px" width="22" height="20" viewBox="0 0 22 20" ><path d="M2,14 V6 L5,3 H10 L12,5 H17 V9" fill="none" stroke="#1b3d6a" stroke-width="1.4" stroke-linejoin="round"/><path d="M2,14 H9" stroke="#1b3d6a" stroke-width="1.4"/><path d="M12,11 H15 Q20,11 20,15 Q20,19 15,19 H11" fill="none" stroke="#f01010" stroke-width="1.4"/><path d="M8,11 L13,8 V14Z" fill="#f01010"/></svg>
<div class="a" style="left:8px;top:731px;width:52px;height:2px;background:#8a8a8a"></div>
<svg style="left:10px;top:739px" width="17" height="23" viewBox="0 0 17 23" ><rect x="1.5" y="4" width="14" height="9" rx="1.5" fill="#dde9f6" stroke="#1b3d6a" stroke-width="1.2"/><rect x="5" y="2" width="6" height="3" fill="#1b3d6a"/><circle cx="8.5" cy="8.5" r="3.4" fill="#f01010"/><path d="M5,13 L2,20 M8.5,13 V19 M12,13 L15,20" stroke="#1b3d6a" stroke-width="1.1"/><ellipse cx="8.5" cy="21.5" rx="5" ry="1" fill="#ccc"/></svg>
<svg style="left:42px;top:738px" width="17" height="24" viewBox="0 0 17 24" ><circle cx="8" cy="2.5" r="2.2" fill="#1b3d6a"/><path d="M8,5 L6,12 L3,22 M6,12 L10,16 L11,22 M7,7 L11,11" stroke="#1b3d6a" stroke-width="2.3" stroke-linecap="round" fill="none"/><rect x="2" y="6" width="3" height="6" rx="1" fill="#f01010"/><path d="M14,6 V22" stroke="#1f9ad8" stroke-width="1.1"/><path d="M1,22.5 H16" stroke="#1b3d6a" stroke-width="1"/></svg>
<svg style="left:7px;top:773px" width="22" height="19" viewBox="0 0 22 19" ><path d="M3,10 Q11,1 19,10 Q11,19 3,10Z" fill="#fff" stroke="#1b3d6a" stroke-width="2"/><circle cx="12" cy="10.5" r="4.6" fill="#26a0e0" stroke="#1b3d6a" stroke-width="1"/><circle cx="12" cy="10.5" r="2" fill="#fff" opacity="0.3"/><path d="M3,10 Q11,1 19,10" fill="none" stroke="#1b3d6a" stroke-width="3"/><path d="M1,4 L5,6 M0,7 L4,8 M2,1 L6,5" stroke="#1b3d6a" stroke-width="1.2"/></svg>
<svg style="left:36px;top:770px" width="24" height="24" viewBox="0 0 24 24" ><path d="M21,3 L2,12 L21,21" fill="none" stroke="#1b3d6a" stroke-width="1.3" stroke-dasharray="14,1.5,2,1.5"/><path d="M14,6 Q17,12 14,18" fill="none" stroke="#1b3d6a" stroke-width="1.3"/><path d="M19,5 Q22,12 19,19" fill="none" stroke="#1f9ad8" stroke-width="1.5"/><path d="M18,5 L21,3 L21,8Z M18,19 L21,21 L21,16Z" fill="#1f9ad8"/></svg>
<div class="a" style="left:8px;top:801px;width:52px;height:2px;background:#8a8a8a"></div>
<svg style="left:6px;top:807px" width="27" height="27" viewBox="0 0 27 27" ><path d="M11,1 L21,6 V17 L11,22 L1,17 V6Z" fill="none" stroke="#1a5c9c" stroke-width="2.6" stroke-linejoin="round"/><path d="M11,5 L17,8 V15 L11,18 L5,15 V8Z" fill="none" stroke="#1a5c9c" stroke-width="1.3"/><path d="M8,10 L11,8.5 L14,10 V13.5 L11,15 L8,13.5Z M8,10 L11,11.5 L14,10 M11,11.5 V15" fill="none" stroke="#1a5c9c" stroke-width="0.9"/><path d="M18,15 V21 H15 L20.5,26 L26,21 H23 V15Z" fill="#fff" stroke="#1a5c9c" stroke-width="1.3"/></svg>
<svg style="left:39px;top:808px" width="25" height="26" viewBox="0 0 25 26" ><path d="M2,2 L11,8 L20,2 M2,8 L11,14 L20,8 M2,14 L11,20 L20,14" fill="none" stroke="#1a5c9c" stroke-width="2.6"/><path d="M2,2 L11,14 L2,20 M20,2 L11,14 L20,20" fill="none" stroke="#1a5c9c" stroke-width="0"/><path d="M2,20 L20,2" stroke="#1a5c9c" stroke-width="2.8"/><circle cx="18" cy="18" r="6.5" fill="#fff" stroke="#1a5c9c" stroke-width="1.6"/><path d="M15,18 A3,3 0 0 1 21,17 M21,18 A3,3 0 0 1 15,19" fill="none" stroke="#1a5c9c" stroke-width="1"/></svg>
<svg style="left:7px;top:840px" width="27" height="24" viewBox="0 0 27 24" ><path d="M1,6 L10,1 L19,6 L10,11Z" fill="#fff" stroke="#1a5c9c" stroke-width="2" stroke-linejoin="round"/><path d="M6,6 L10,4 L14,6 L10,8Z" fill="none" stroke="#1a5c9c" stroke-width="1"/><path d="M1,10 L10,15 L19,10 M1,14 L10,19 L19,14 M1,18 L10,23 L14,21" fill="none" stroke="#1a5c9c" stroke-width="2.2"/><path d="M13,15 H19 V12 L26,17.5 L19,23 V20 H13Z" fill="#fff" stroke="#1a5c9c" stroke-width="1.3"/></svg>
<svg style="left:39px;top:840px" width="25" height="26" viewBox="0 0 25 26" ><path d="M2,2 L11,8 L20,2 M2,8 L11,14 L20,8 M2,14 L11,20 L20,14" fill="none" stroke="#1a5c9c" stroke-width="2.6"/><path d="M2,20 L20,2" stroke="#1a5c9c" stroke-width="2.8"/><rect x="16.5" y="11" width="3" height="3" fill="#fff" stroke="#1a5c9c" stroke-width="1" transform="rotate(0 18 18)"/><rect x="16.5" y="11" width="3" height="3" fill="#fff" stroke="#1a5c9c" stroke-width="1" transform="rotate(45 18 18)"/><rect x="16.5" y="11" width="3" height="3" fill="#fff" stroke="#1a5c9c" stroke-width="1" transform="rotate(90 18 18)"/><rect x="16.5" y="11" width="3" height="3" fill="#fff" stroke="#1a5c9c" stroke-width="1" transform="rotate(135 18 18)"/><rect x="16.5" y="11" width="3" height="3" fill="#fff" stroke="#1a5c9c" stroke-width="1" transform="rotate(180 18 18)"/><rect x="16.5" y="11" width="3" height="3" fill="#fff" stroke="#1a5c9c" stroke-width="1" transform="rotate(225 18 18)"/><rect x="16.5" y="11" width="3" height="3" fill="#fff" stroke="#1a5c9c" stroke-width="1" transform="rotate(270 18 18)"/><rect x="16.5" y="11" width="3" height="3" fill="#fff" stroke="#1a5c9c" stroke-width="1" transform="rotate(315 18 18)"/><circle cx="18" cy="18" r="5.6" fill="#fff" stroke="#1a5c9c" stroke-width="1.3"/><circle cx="18" cy="18" r="2.3" fill="none" stroke="#1a5c9c" stroke-width="1.1"/></svg><div class="a" style="left:0px;top:982px;width:1479px;height:1px;background:#dcdce3"></div>
<div class="a" style="left:0px;top:983px;width:2px;height:20px;background:#dcdce3"></div>
<svg style="left:2px;top:991px" width="5" height="14" viewBox="0 0 5 14" ><rect x="0.5" y="1.0" width="1.1" height="1.1" fill="#b4b4bc"/><rect x="3.5" y="1.0" width="1.1" height="1.1" fill="#b4b4bc"/><rect x="0.5" y="4.2" width="1.1" height="1.1" fill="#b4b4bc"/><rect x="3.5" y="4.2" width="1.1" height="1.1" fill="#b4b4bc"/><rect x="0.5" y="7.4" width="1.1" height="1.1" fill="#b4b4bc"/><rect x="3.5" y="7.4" width="1.1" height="1.1" fill="#b4b4bc"/><rect x="0.5" y="10.6" width="1.1" height="1.1" fill="#b4b4bc"/><rect x="3.5" y="10.6" width="1.1" height="1.1" fill="#b4b4bc"/></svg>
<div class="t" style="left:11px;top:996px;font-size:12.7px;color:#3a3a4a">Measurements</div>
<div class="a" style="left:136px;top:989px;width:158px;height:20px;background:#fff;border:1px solid #a4a4a8;border-radius:2px"></div>
<div class="a" style="left:298px;top:983px;width:2px;height:20px;background:#dcdce3"></div>
<svg style="left:301px;top:992px" width="5" height="14" viewBox="0 0 5 14" ><rect x="0.5" y="1.0" width="1.1" height="1.1" fill="#b4b4bc"/><rect x="3.5" y="1.0" width="1.1" height="1.1" fill="#b4b4bc"/><rect x="0.5" y="4.2" width="1.1" height="1.1" fill="#b4b4bc"/><rect x="3.5" y="4.2" width="1.1" height="1.1" fill="#b4b4bc"/><rect x="0.5" y="7.4" width="1.1" height="1.1" fill="#b4b4bc"/><rect x="3.5" y="7.4" width="1.1" height="1.1" fill="#b4b4bc"/><rect x="0.5" y="10.6" width="1.1" height="1.1" fill="#b4b4bc"/><rect x="3.5" y="10.6" width="1.1" height="1.1" fill="#b4b4bc"/></svg>
<svg style="left:309px;top:983px" width="34" height="20" viewBox="0 0 34 20" ><circle cx="16.5" cy="17" r="15.5" fill="none" stroke="#f4a070" stroke-width="0.9"/><path d="M12,7 L16,4 H20 L22,8 L20,12 H16 Z" fill="none" stroke="#f07830" stroke-width="1.6"/><path d="M7,17 L10,13 H14 L16,17 M18,17 L20,13 H25 L27,17" fill="none" stroke="#f07830" stroke-width="1.6"/></svg>
<div class="a" style="left:345px;top:990px;width:2px;height:13px;background:#8e8e8e"></div>
<svg style="left:350px;top:984px" width="30" height="19" viewBox="0 0 30 19" ><path d="M14,5 L20,1 V12 L28,15 L22,19 H8 L1,16 L14,12Z" fill="#444" stroke="#f08030" stroke-width="0.8"/></svg>
<div class="a" style="left:382px;top:983px;width:2px;height:20px;background:#dcdce3"></div>
<svg style="left:385px;top:992px" width="5" height="14" viewBox="0 0 5 14" ><rect x="0.5" y="1.0" width="1.1" height="1.1" fill="#b4b4bc"/><rect x="3.5" y="1.0" width="1.1" height="1.1" fill="#b4b4bc"/><rect x="0.5" y="4.2" width="1.1" height="1.1" fill="#b4b4bc"/><rect x="3.5" y="4.2" width="1.1" height="1.1" fill="#b4b4bc"/><rect x="0.5" y="7.4" width="1.1" height="1.1" fill="#b4b4bc"/><rect x="3.5" y="7.4" width="1.1" height="1.1" fill="#b4b4bc"/><rect x="0.5" y="10.6" width="1.1" height="1.1" fill="#b4b4bc"/><rect x="3.5" y="10.6" width="1.1" height="1.1" fill="#b4b4bc"/></svg>
<svg style="left:397px;top:987px" width="24" height="16" viewBox="0 0 24 16" ><path d="M1,3 L20,1 L22,16 H3Z" fill="#b8f0b8" stroke="#e8d020" stroke-width="1.4"/><path d="M1.5,3 L9,10 L3,14Z" fill="#e81010" opacity="0"/><path d="M1.5,3.5 L10,9 L7,12Z" fill="#e81010"/><path d="M10,9 L21,12 V16 L12,16Z" fill="#1010e8"/></svg>
<div class="a" style="left:429px;top:990px;width:2px;height:13px;background:#8e8e8e"></div>
<svg style="left:435px;top:987px" width="25" height="16" viewBox="0 0 25 16" ><path d="M2,2 H13 V16 H10Z" fill="#b8f8b8"/><path d="M13,1 H21 L23,16 H13Z" fill="#1010e8"/><rect x="2" y="1.5" width="2.5" height="2.5" fill="#e81010"/></svg>
<div class="a" style="left:467px;top:990px;width:2px;height:13px;background:#8e8e8e"></div>
<svg style="left:473px;top:986px" width="34" height="17" viewBox="0 0 34 17" ><path d="M5,0.5 L0.5,5.5 H3 V8 H7 V5.5 H9.5Z" fill="#98f098" stroke="#60b060" stroke-width="0.6"/><path d="M5,7 L0,12.5 H3 V17 H7 V12.5 H10Z" fill="#1010e0"/><path d="M16,3 H21 L21.5,10 H25 L19,17 L13,10 H16.5Z" fill="#1010e0"/></svg>
<svg style="left:505px;top:986px" width="26" height="17" viewBox="0 0 26 17" ><path d="M5,6 H10 V17 H5Z" fill="#b02020"/><path d="M19,0.5 L14.5,5.5 H17 V8 H21 V5.5 H23.5Z" fill="#f0a0a0" stroke="#c07070" stroke-width="0.6"/><path d="M19,7 L14,12.5 H17 V17 H21 V12.5 H24Z" fill="#b02020"/></svg>
<div class="a" style="left:537px;top:990px;width:2px;height:13px;background:#8e8e8e"></div>
<svg style="left:543px;top:987px" width="24" height="16" viewBox="0 0 24 16" ><path d="M1,1 L5,1 L3,5Z" fill="#98f098" stroke="#60b060" stroke-width="0.6"/><path d="M1,1 L8,2 L2,8Z" fill="#98f098" stroke="#60b060" stroke-width="0.6"/><path d="M4,4 L8,8" stroke="#98f098" stroke-width="2.6"/><path d="M9,9 L22,20" stroke="#1010e0" stroke-width="3.6"/><path d="M6,6 L13,7 L7,13Z" fill="#1010e0"/></svg>
<div class="a" style="left:575px;top:990px;width:2px;height:13px;background:#8e8e8e"></div>
<svg style="left:581px;top:987px" width="26" height="16" viewBox="0 0 26 16" ><path d="M1,2 H21 L23,16 H2Z" fill="#1010e0"/><path d="M2,2 H21 L12,10Z M5,16 L12,10 L19,16Z" fill="#a8f8a8"/></svg>
<div class="a" style="left:613px;top:990px;width:2px;height:13px;background:#8e8e8e"></div>
<svg style="left:619px;top:987px" width="28" height="16" viewBox="0 0 28 16" ><path d="M1,6 L7,1 V4 Q15,2 20,6 L17,9 Q12,7 7,8 V11Z" fill="#a8f8a8" stroke="#60b060" stroke-width="0.6"/><path d="M17,4 Q26,6 24,16 H19 Q20,10 15,8Z" fill="#1010e0"/></svg>
<svg style="left:651px;top:987px" width="28" height="16" viewBox="0 0 28 16" ><path d="M1,6 L7,1 V4 Q15,2 20,6 L17,9 Q12,7 7,8 V11Z" fill="#f0a8a8" stroke="#c06060" stroke-width="0.6"/><path d="M17,4 Q26,6 24,16 H19 Q20,10 15,8Z" fill="#b02020"/></svg>
<div class="a" style="left:683px;top:990px;width:2px;height:13px;background:#8e8e8e"></div>
<svg style="left:689px;top:987px" width="28" height="16" viewBox="0 0 28 16" ><path d="M1,1 H9 V16 H1Z" fill="#b02020"/><path d="M10,10 Q12,3 22,2 L24,8 Q16,9 15,16 H10Z" fill="#f0b0b0"/><circle cx="17" cy="16" r="8" fill="none" stroke="#c0c8f0" stroke-width="0.9"/></svg>
<div class="a" style="left:721px;top:990px;width:2px;height:13px;background:#8e8e8e"></div>
<div class="a" style="left:726px;top:983px;width:2px;height:20px;background:#dcdce3"></div>
<svg style="left:730px;top:992px" width="5" height="14" viewBox="0 0 5 14" ><rect x="0.5" y="1.0" width="1.1" height="1.1" fill="#b4b4bc"/><rect x="3.5" y="1.0" width="1.1" height="1.1" fill="#b4b4bc"/><rect x="0.5" y="4.2" width="1.1" height="1.1" fill="#b4b4bc"/><rect x="3.5" y="4.2" width="1.1" height="1.1" fill="#b4b4bc"/><rect x="0.5" y="7.4" width="1.1" height="1.1" fill="#b4b4bc"/><rect x="3.5" y="7.4" width="1.1" height="1.1" fill="#b4b4bc"/><rect x="0.5" y="10.6" width="1.1" height="1.1" fill="#b4b4bc"/><rect x="3.5" y="10.6" width="1.1" height="1.1" fill="#b4b4bc"/></svg>
<svg style="left:742px;top:987px" width="24" height="16" viewBox="0 0 24 16" ><rect x="1" y="1" width="15" height="15" fill="#d8ecfa" stroke="#2a9ad8" stroke-width="1.6"/><rect x="7" y="7" width="15" height="12" fill="none" stroke="#2a9ad8" stroke-width="1.3"/><rect x="9" y="9" width="6" height="6" fill="none" stroke="#4a6a90" stroke-width="1" stroke-dasharray="1.5,1"/></svg>
<div class="a" style="left:773px;top:990px;width:2px;height:13px;background:#8e8e8e"></div>
<svg style="left:781px;top:987px" width="23" height="16" viewBox="0 0 23 16" ><rect x="1" y="1" width="13" height="14" fill="none" stroke="#4a6a90" stroke-width="1.1"/><rect x="7" y="7" width="14" height="12" fill="none" stroke="#2a9ad8" stroke-width="1.5"/></svg>
<svg style="left:812px;top:987px" width="24" height="16" viewBox="0 0 24 16" ><path d="M1,1 H13 L16,6 H22 V16 H1Z" fill="#d8ecfa" stroke="#2a9ad8" stroke-width="1.5"/></svg>
<svg style="left:844px;top:987px" width="24" height="16" viewBox="0 0 24 16" ><rect x="1" y="1" width="13" height="14" fill="none" stroke="#4a6a90" stroke-width="1.1"/><rect x="17" y="8" width="4" height="10" fill="none" stroke="#2a9ad8" stroke-width="1.5"/></svg>
<svg style="left:876px;top:987px" width="24" height="16" viewBox="0 0 24 16" ><path d="M1,1 H12 V7 H22 V16 H8 V11 H1Z" fill="none" stroke="#2a9ad8" stroke-width="1.5"/><rect x="7" y="6" width="6" height="6" fill="none" stroke="#2a9ad8" stroke-width="1.3"/><rect x="12" y="11" width="6" height="6" fill="#345"/></svg>
<svg style="left:908px;top:987px" width="24" height="16" viewBox="0 0 24 16" ><rect x="1" y="1" width="14" height="14" fill="#d8ecfa" stroke="#2a9ad8" stroke-width="1.5"/><rect x="7" y="7" width="8" height="9" fill="none" stroke="#2a9ad8" stroke-width="1.4"/><rect x="12" y="9" width="10" height="9" fill="#d8ecfa" stroke="#2a9ad8" stroke-width="1.4"/></svg>
<div class="a" style="left:940px;top:983px;width:2px;height:20px;background:#dcdce3"></div>
<svg style="left:943px;top:992px" width="5" height="14" viewBox="0 0 5 14" ><rect x="0.5" y="1.0" width="1.1" height="1.1" fill="#b4b4bc"/><rect x="3.5" y="1.0" width="1.1" height="1.1" fill="#b4b4bc"/><rect x="0.5" y="4.2" width="1.1" height="1.1" fill="#b4b4bc"/><rect x="3.5" y="4.2" width="1.1" height="1.1" fill="#b4b4bc"/><rect x="0.5" y="7.4" width="1.1" height="1.1" fill="#b4b4bc"/><rect x="3.5" y="7.4" width="1.1" height="1.1" fill="#b4b4bc"/><rect x="0.5" y="10.6" width="1.1" height="1.1" fill="#b4b4bc"/><rect x="3.5" y="10.6" width="1.1" height="1.1" fill="#b4b4bc"/></svg>
<svg style="left:955px;top:987px" width="23" height="16" viewBox="0 0 23 16" ><path d="M2,3 L19,1 L21,16 L3,18Z" fill="#eee" stroke="#333" stroke-width="1"/><path d="M4,7 H19 M4,11 H19 M4,15 H19 M9,3 V7 M14,7 V11 M9,11 V15" stroke="#777" stroke-width="0.8"/></svg>
<svg style="left:987px;top:987px" width="23" height="16" viewBox="0 0 23 16" ><path d="M2,3 L19,1 L21,16 L3,18Z" fill="#eee" stroke="#333" stroke-width="1"/><path d="M4,7 H19 M4,11 H19 M4,15 H19 M9,3 V7 M14,7 V11 M9,11 V15" stroke="#777" stroke-width="0.8"/><path d="M2,3 L19,1" stroke="#2030c0" stroke-width="1.6"/></svg>
<svg style="left:1019px;top:987px" width="23" height="16" viewBox="0 0 23 16" ><rect x="2" y="2" width="18" height="16" rx="2" fill="#eee" stroke="#333" stroke-width="1"/><path d="M4,7 H19 M4,11 H19 M4,15 H19 M9,3 V7 M14,7 V11 M9,11 V15" stroke="#777" stroke-width="0.8"/><path d="M6,16 L13,11 V16Z" fill="#e81010"/></svg>
<svg style="left:1051px;top:987px" width="23" height="16" viewBox="0 0 23 16" ><rect x="2" y="2" width="18" height="16" rx="2" fill="#eee" stroke="#333" stroke-width="1"/><path d="M4,7 H19 M4,11 H19 M4,15 H19 M9,3 V7 M14,7 V11 M9,11 V15" stroke="#777" stroke-width="0.8"/><path d="M20,14 L13,16 L20,18Z" fill="#e81010"/></svg>
<svg style="left:1083px;top:987px" width="23" height="16" viewBox="0 0 23 16" ><rect x="2" y="2" width="18" height="16" rx="2" fill="#eee" stroke="#333" stroke-width="1"/><path d="M4,7 H19 M4,11 H19 M4,15 H19 M9,3 V7 M14,7 V11 M9,11 V15" stroke="#777" stroke-width="0.8"/><path d="M20,16 H12 L17,18Z" fill="#e81010"/></svg>
<svg style="left:1115px;top:987px" width="23" height="16" viewBox="0 0 23 16" ><rect x="2" y="2" width="18" height="16" rx="2" fill="#eee" stroke="#333" stroke-width="1"/><path d="M4,7 H19 M4,11 H19 M4,15 H19 M9,3 V7 M14,7 V11 M9,11 V15" stroke="#777" stroke-width="0.8"/><path d="M11,2 L8,6 H14Z M2,11 L6,8 V14Z M20,11 L16,8 V14Z" fill="#e81010"/><path d="M11,5 V11 M5,11 H17" stroke="#e81010" stroke-width="1.4"/></svg>
<div class="a" style="left:1144px;top:983px;width:2px;height:20px;background:#dcdce3"></div>
<svg style="left:1148px;top:992px" width="5" height="14" viewBox="0 0 5 14" ><rect x="0.5" y="1.0" width="1.1" height="1.1" fill="#b4b4bc"/><rect x="3.5" y="1.0" width="1.1" height="1.1" fill="#b4b4bc"/><rect x="0.5" y="4.2" width="1.1" height="1.1" fill="#b4b4bc"/><rect x="3.5" y="4.2" width="1.1" height="1.1" fill="#b4b4bc"/><rect x="0.5" y="7.4" width="1.1" height="1.1" fill="#b4b4bc"/><rect x="3.5" y="7.4" width="1.1" height="1.1" fill="#b4b4bc"/><rect x="0.5" y="10.6" width="1.1" height="1.1" fill="#b4b4bc"/><rect x="3.5" y="10.6" width="1.1" height="1.1" fill="#b4b4bc"/></svg>
<svg style="left:1156px;top:989px" width="32" height="14" viewBox="0 0 32 14" ><path d="M2,7 L8,2 V5 H24 V2 L30,7 L24,12 V9 H8 V12Z" fill="#f8b000" stroke="#222" stroke-width="1"/><rect x="1" y="13" width="30" height="2" fill="#111"/></svg>
<div class="a" style="left:1190px;top:983px;width:2px;height:20px;background:#dcdce3"></div>
<svg style="left:1194px;top:992px" width="5" height="14" viewBox="0 0 5 14" ><rect x="0.5" y="1.0" width="1.1" height="1.1" fill="#b4b4bc"/><rect x="3.5" y="1.0" width="1.1" height="1.1" fill="#b4b4bc"/><rect x="0.5" y="4.2" width="1.1" height="1.1" fill="#b4b4bc"/><rect x="3.5" y="4.2" width="1.1" height="1.1" fill="#b4b4bc"/><rect x="0.5" y="7.4" width="1.1" height="1.1" fill="#b4b4bc"/><rect x="3.5" y="7.4" width="1.1" height="1.1" fill="#b4b4bc"/><rect x="0.5" y="10.6" width="1.1" height="1.1" fill="#b4b4bc"/><rect x="3.5" y="10.6" width="1.1" height="1.1" fill="#b4b4bc"/></svg>
<svg style="left:1202px;top:983px" width="33" height="20" viewBox="0 0 33 20" ><circle cx="16" cy="17" r="15.5" fill="none" stroke="#f4a070" stroke-width="0.9"/><path d="M11,7 L15,4 H19 L21,8 L19,12 H15 Z" fill="none" stroke="#f07830" stroke-width="1.6"/><path d="M6,17 L9,13 H13 L15,17 M17,17 L19,13 H24 L26,17" fill="none" stroke="#f07830" stroke-width="1.6"/></svg>
<div class="a" style="left:1236px;top:990px;width:2px;height:13px;background:#8e8e8e"></div>
<svg style="left:1241px;top:986px" width="28" height="17" viewBox="0 0 28 17" ><path d="M3,2 Q6,1 8,5 L12,12 M10,7 Q13,4 16,7 M15,7 Q18,5 20,8 L24,17" fill="none" stroke="#f08a20" stroke-width="1.6"/><path d="M16,7 Q18,5 20,8 L24,17" fill="none" stroke="#333" stroke-width="1.4"/></svg>
<svg style="left:1274px;top:986px" width="28" height="17" viewBox="0 0 28 17" ><rect x="1" y="1" width="26" height="6" fill="#f8a020" stroke="#222" stroke-width="1.1"/><path d="M1,7 V17 M27,7 V17" stroke="#222" stroke-width="1.1"/><path d="M5,10 H16 M5,14 H14" stroke="#222" stroke-width="1.6"/><rect x="20" y="3" width="5" height="3" fill="#222"/></svg>
<svg style="left:1305px;top:985px" width="30" height="18" viewBox="0 0 30 18" ><ellipse cx="15" cy="8" rx="7" ry="7.5" fill="#222"/><circle cx="12" cy="7" r="1.8" fill="#f8a020"/><circle cx="18" cy="7" r="1.8" fill="#f8a020"/><path d="M2,9 L8,12 M28,9 L22,12 M2,18 L8,15 M28,18 L22,15" stroke="#222" stroke-width="2.2"/><circle cx="2.5" cy="9" r="2.2" fill="#222"/><circle cx="27.5" cy="9" r="2.2" fill="#222"/><rect x="10" y="14" width="10" height="5" fill="#222"/></svg>
<div class="a" style="left:1338px;top:990px;width:2px;height:13px;background:#8e8e8e"></div>
<svg style="left:1344px;top:986px" width="28" height="17" viewBox="0 0 28 17" ><rect x="9" y="1" width="16" height="13" fill="#fff" stroke="#555" stroke-width="1.1"/><rect x="15" y="4" width="6" height="5" fill="none" stroke="#f8a020" stroke-width="1.2"/><path d="M1,8 H13 V15 H5 L2,17Z" fill="#fff" stroke="#555" stroke-width="1.1"/><path d="M4,11 H11" stroke="#777" stroke-width="0.9" stroke-dasharray="1.5,1"/><path d="M25,10 L27,17" stroke="#555" stroke-width="1.2"/></svg>
<svg style="left:1376px;top:986px" width="28" height="17" viewBox="0 0 28 17" ><path d="M5,6 H23 M5,6 L14,14 L23,6" fill="none" stroke="#555" stroke-width="1"/><path d="M1,4 L5,1 L9,4 V8 L5,10 L1,8Z M19,4 L23,1 L27,4 V8 L23,10 L19,8Z" fill="#fff" stroke="#444" stroke-width="1.1"/><path d="M11,13 L14,11 L17,13 V17 H11Z" fill="#f8c880" stroke="#f08a20" stroke-width="1.1"/></svg>
<svg style="left:1408px;top:986px" width="28" height="17" viewBox="0 0 28 17" ><path d="M3,14 Q10,4 20,7" fill="none" stroke="#aaa" stroke-width="2.4"/><path d="M26,1 L13,15 L11,17" stroke="#333" stroke-width="2.4"/><path d="M16,12 L19,9" stroke="#f08a20" stroke-width="2.6"/></svg>
<svg style="left:1440px;top:986px" width="28" height="17" viewBox="0 0 28 17" ><rect x="1" y="1" width="25" height="13" rx="2" fill="#fff" stroke="#555" stroke-width="1.3"/><circle cx="7.5" cy="7.5" r="1.6" fill="#f08a20"/><circle cx="13.5" cy="7.5" r="1.6" fill="#f08a20"/><circle cx="19.5" cy="7.5" r="1.6" fill="#f08a20"/><path d="M9,14 Q13,17 17,14" fill="none" stroke="#555" stroke-width="1.2"/></svg>
<div class="a" style="left:1471px;top:987px;width:12px;height:20px;background:#dce9f6;border:1px solid #3b82c8;border-radius:3px"></div>
<div class="a" style="left:1410px;top:130px;width:72px;height:59px;background:#f0f0f5;border:1px solid #e2e2e8;box-sizing:border-box"></div>
<div class="a" style="left:1412px;top:133px;width:70px;height:20px;background:#9fb8d6;box-shadow:inset 0 1px 0 #8a9ab0"></div>
<div class="t" style="left:1416px;top:137px;font-size:12.2px;font-weight:bold;color:#3a3a44;letter-spacing:0.2px">Keyframe A</div>
<svg style="left:1417px;top:158px" width="22" height="26" viewBox="0 0 22 26" ><defs><linearGradient id="pl" x1="0" y1="0" x2="1" y2="1"><stop offset="0" stop-color="#6aa8f8"/><stop offset="1" stop-color="#1a50c0"/></linearGradient></defs><path d="M1,1 L21,12.5 L1,24Z" fill="url(#pl)" stroke="#2058c0" stroke-width="0.8" stroke-linejoin="round"/></svg>
<svg style="left:1447px;top:159px" width="26" height="26" viewBox="0 0 26 26" ><circle cx="12.8" cy="12.2" r="11" fill="#fff" stroke="#555" stroke-width="2"/><circle cx="12.8" cy="12.2" r="4.6" fill="#e81010"/></svg>
<div class="a" style="left:1414px;top:224px;width:37px;height:59px;background:#f0f0f5;border:1px solid #e2e2e8;box-sizing:border-box"></div>
<div class="a" style="left:1416px;top:227px;width:32px;height:19px;background:#9fb8d6"></div>
<svg style="left:1416px;top:227px" width="32" height="19" viewBox="0 0 32 19" ><circle cx="5.5" cy="13" r="1" fill="#333"/><circle cx="9" cy="13" r="1" fill="#333"/><circle cx="12.5" cy="13" r="1" fill="#333"/><path d="M20,6 L26,12 M26,6 L20,12" stroke="#333" stroke-width="1.1"/></svg>
<svg style="left:1418px;top:252px" width="28" height="26" viewBox="0 0 28 26" ><path d="M2,9 L15,2 L26,23 H2Z" fill="#b9b9bd" stroke="#9a9aa0" stroke-width="1"/></svg>
</body></html>
